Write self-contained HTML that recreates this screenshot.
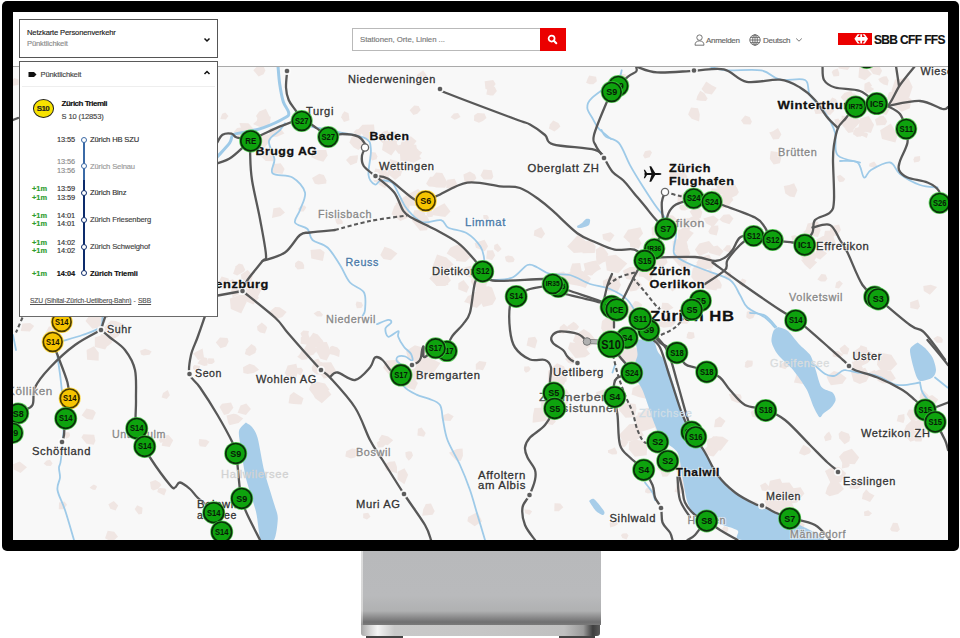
<!DOCTYPE html>
<html><head><meta charset="utf-8">
<style>
*{margin:0;padding:0;box-sizing:border-box}
html,body{width:960px;height:638px;overflow:hidden;background:#fff;font-family:"Liberation Sans",sans-serif}
#frame{position:absolute;left:1.5px;top:1px;width:957.5px;height:550px;background:#000;border-radius:5px}
#screen{position:absolute;left:13px;top:12px;width:935px;height:528px;background:#f7f7f7;overflow:hidden}
#header{position:absolute;left:0;top:0;width:935px;height:55px;background:#fff;border-bottom:1px solid #aaaaaa}
#map{position:absolute;left:0;top:0}
.abs{position:absolute}
.t{white-space:nowrap;line-height:1;-webkit-text-stroke:0.15px currentColor}
#stand{position:absolute;left:361px;top:550px;width:240px;height:88px}
</style></head><body>
<div id="frame"></div>
<div id="screen">
<svg id="map" width="935" height="528" viewBox="13 12 935 528">
<g font-family="Liberation Sans, sans-serif">
<rect x="13" y="12" width="935" height="528" fill="#f8f8f8"/>
<g fill="#f0e6e3"><path d="M614.5 323.2 L612.7 329.4 L604.2 333.4 L601.1 328.5 L602.0 320.9 L607.7 316.6 L611.8 315.6Z"/><path d="M674.4 323.3 L671.6 326.8 L663.6 327.8 L658.3 325.9 L659.2 321.5 L662.8 316.1 L671.5 318.9Z"/><path d="M670.9 318.6 L668.7 321.3 L663.4 321.5 L663.1 315.8 L668.5 314.2Z"/><path d="M607.9 306.7 L605.3 312.0 L601.6 312.0 L599.3 309.8 L599.5 306.9 L603.2 302.8 L606.7 304.2Z"/><path d="M569.1 328.2 L563.6 333.7 L559.2 332.9 L559.8 327.0 L563.9 323.8Z"/><path d="M640.7 352.8 L635.8 364.4 L629.1 365.2 L617.1 357.5 L616.5 349.9 L628.5 344.2 L637.1 348.4Z"/><path d="M591.0 278.2 L585.6 287.9 L575.7 284.5 L574.1 273.6 L582.5 270.9Z"/><path d="M688.8 318.7 L687.5 323.7 L680.4 323.4 L677.4 319.0 L679.5 314.3 L686.6 314.7Z"/><path d="M639.3 319.2 L640.7 323.9 L631.7 322.9 L629.9 320.0 L630.2 313.8 L636.9 314.8Z"/><path d="M638.5 273.8 L634.5 280.3 L626.3 279.0 L622.7 270.8 L629.9 267.0 L637.0 266.7Z"/><path d="M601.1 268.9 L597.4 270.7 L590.9 275.7 L585.2 270.6 L583.6 263.5 L591.8 261.2 L596.4 260.5Z"/><path d="M642.3 304.8 L639.5 310.6 L633.6 312.4 L631.1 309.0 L632.6 304.0 L634.9 301.1 L638.1 301.6Z"/><path d="M608.8 259.6 L602.9 262.4 L599.0 265.0 L596.4 261.5 L596.0 256.8 L597.5 252.9 L604.7 252.9Z"/><path d="M584.7 276.6 L583.4 280.0 L577.6 282.4 L573.2 279.5 L573.7 273.7 L577.3 270.6 L585.1 272.3Z"/><path d="M641.3 243.3 L638.7 248.8 L630.2 247.0 L629.8 241.7 L639.2 239.1Z"/><path d="M582.6 276.7 L581.4 286.2 L565.3 283.5 L565.2 273.9 L577.9 269.1Z"/><path d="M627.3 263.6 L618.2 273.3 L606.8 270.5 L604.8 256.3 L615.8 254.8Z"/><path d="M660.6 330.3 L653.7 336.6 L646.6 333.2 L644.2 325.9 L657.3 324.6Z"/><path d="M652.6 339.5 L649.6 344.9 L645.3 343.3 L645.0 338.9 L650.5 336.2Z"/><path d="M595.7 246.5 L594.7 253.1 L582.5 253.3 L582.2 246.8 L583.8 240.9 L592.1 241.2Z"/><path d="M654.2 272.1 L650.2 282.5 L640.9 275.1 L639.7 269.3 L649.5 264.1Z"/><path d="M581.7 271.0 L581.9 275.6 L570.4 276.6 L570.3 269.5 L572.2 263.5 L580.2 262.9Z"/><path d="M661.8 243.8 L660.4 246.0 L650.8 248.0 L649.5 242.1 L651.7 236.8 L662.8 236.9Z"/><path d="M619.2 283.3 L616.3 291.5 L608.8 291.3 L603.1 287.2 L602.8 280.7 L608.9 277.9 L619.7 278.4Z"/><path d="M586.5 243.6 L584.0 252.3 L573.9 252.9 L567.1 246.6 L570.3 243.2 L577.7 235.0 L584.8 240.0Z"/><path d="M619.9 343.4 L613.6 351.4 L608.2 347.6 L602.3 343.5 L605.9 334.1 L615.0 338.2Z"/><path d="M673.5 307.8 L668.3 310.8 L661.3 309.0 L662.1 302.7 L668.0 303.1Z"/><path d="M641.4 311.3 L637.7 319.9 L628.5 318.0 L625.9 316.6 L622.6 305.6 L631.4 305.4 L638.1 304.2Z"/><path d="M651.8 326.6 L649.3 329.7 L640.2 332.1 L637.8 327.9 L639.0 322.8 L641.7 320.7 L648.5 321.3Z"/><path d="M642.2 285.0 L636.5 290.6 L630.4 291.4 L627.2 287.0 L628.7 283.6 L632.0 281.1 L637.7 279.6Z"/><path d="M569.5 276.8 L558.3 288.6 L550.3 284.1 L550.8 273.9 L563.6 271.4Z"/><path d="M650.1 273.6 L649.0 275.2 L644.1 276.9 L638.7 276.5 L638.8 268.3 L644.6 264.2 L647.2 266.0Z"/><path d="M590.1 353.8 L585.1 357.3 L575.5 357.9 L568.0 348.6 L569.9 342.2 L582.4 343.7Z"/><path d="M641.3 323.2 L641.0 327.1 L633.9 329.7 L633.0 324.8 L631.8 320.4 L636.1 317.2 L639.0 320.1Z"/><path d="M633.9 350.6 L628.8 355.6 L619.5 351.1 L619.0 345.3 L625.8 341.2Z"/><path d="M628.0 304.2 L620.2 312.3 L612.6 309.3 L615.7 300.8 L622.3 300.3Z"/><path d="M597.0 341.2 L592.2 344.5 L584.4 350.7 L572.9 341.1 L575.2 335.0 L583.8 329.0 L589.9 333.0Z"/><path d="M608.4 254.1 L605.1 262.0 L596.4 256.9 L595.6 249.7 L601.9 245.3Z"/><path d="M621.0 284.7 L617.4 292.6 L607.2 290.7 L605.4 283.5 L609.5 275.6 L616.2 276.8Z"/><path d="M643.1 233.4 L634.5 243.8 L629.2 242.5 L623.3 237.0 L628.0 229.8 L640.4 227.3Z"/><path d="M841.2 123.7 L838.4 126.8 L835.5 125.1 L834.4 119.5 L838.4 118.5Z"/><path d="M857.4 95.9 L855.1 99.2 L849.2 100.3 L849.1 97.2 L849.0 93.4 L854.6 93.4Z"/><path d="M871.7 121.1 L865.9 127.2 L861.2 125.4 L859.8 118.5 L868.7 116.1Z"/><path d="M865.3 106.0 L863.5 110.4 L859.8 108.5 L855.6 106.2 L857.1 102.7 L858.1 100.0 L863.0 102.1Z"/><path d="M887.2 121.4 L885.0 125.2 L879.4 123.2 L878.1 121.4 L880.0 116.5 L885.2 117.4Z"/><path d="M888.7 80.5 L887.7 85.4 L883.7 84.6 L879.9 82.0 L878.2 79.0 L883.2 76.4 L886.7 76.3Z"/><path d="M867.7 129.4 L860.6 136.6 L853.0 134.2 L854.9 128.6 L861.3 126.2Z"/><path d="M897.7 134.9 L895.4 142.4 L882.0 139.0 L880.1 130.3 L890.8 123.5Z"/><path d="M834.3 110.7 L830.1 115.1 L823.9 113.9 L825.5 109.4 L831.8 107.8Z"/><path d="M885.4 121.9 L884.3 125.0 L876.6 125.4 L874.9 119.6 L879.9 116.0 L883.9 115.7Z"/><path d="M874.2 89.1 L869.6 92.4 L866.4 92.9 L864.1 89.4 L865.6 86.4 L870.2 86.6Z"/><path d="M896.1 94.9 L891.2 99.7 L887.0 99.8 L888.8 92.4 L894.0 90.7Z"/><path d="M861.3 103.6 L855.5 107.5 L853.0 108.5 L848.0 107.0 L846.9 102.1 L850.9 97.6 L856.8 94.8Z"/><path d="M908.0 100.8 L908.0 107.6 L899.7 107.4 L890.5 101.5 L894.6 96.0 L900.6 90.2 L906.0 92.6Z"/><path d="M864.0 132.4 L862.7 135.8 L857.0 137.1 L853.2 134.0 L853.8 130.8 L856.0 127.7 L861.3 128.0Z"/><path d="M871.9 74.2 L864.9 80.2 L858.4 77.4 L859.3 67.1 L864.8 66.3Z"/><path d="M861.3 120.9 L854.5 128.6 L848.3 132.0 L842.6 125.7 L837.9 120.5 L849.2 116.7 L854.7 116.9Z"/><path d="M911.6 99.4 L909.8 108.3 L901.6 111.7 L889.0 103.3 L891.4 98.2 L899.8 91.4 L905.7 95.6Z"/><path d="M882.1 70.7 L879.8 75.5 L873.1 74.0 L869.1 68.7 L873.7 65.5 L878.8 65.3Z"/><path d="M837.4 101.7 L836.2 105.4 L832.4 104.7 L827.9 103.6 L829.7 100.7 L832.3 97.4 L835.8 99.0Z"/><path d="M890.7 107.5 L886.4 115.1 L876.5 112.0 L878.2 106.9 L885.7 105.9Z"/><path d="M853.3 62.7 L847.6 69.9 L838.7 68.6 L837.2 59.5 L847.5 58.2Z"/><path d="M912.6 86.9 L909.1 97.7 L894.9 95.7 L891.6 89.9 L895.1 79.4 L908.3 77.8Z"/><path d="M851.7 120.8 L849.3 126.9 L843.6 125.7 L841.5 120.1 L841.7 115.5 L849.9 116.9Z"/><path d="M874.1 124.8 L870.9 133.0 L857.9 129.9 L860.1 119.2 L870.1 118.7Z"/><path d="M416.6 140.9 L412.6 146.2 L404.3 145.2 L404.9 136.0 L411.1 136.4Z"/><path d="M370.5 134.7 L371.2 138.0 L365.6 138.9 L363.2 136.9 L363.4 132.6 L366.4 130.0 L371.2 131.8Z"/><path d="M374.8 132.2 L371.9 139.3 L365.5 138.0 L358.0 129.5 L362.5 124.7 L374.0 124.6Z"/><path d="M389.8 136.5 L387.6 139.6 L384.9 140.0 L379.8 139.7 L380.6 133.7 L383.7 131.4 L387.7 130.2Z"/><path d="M396.9 141.4 L396.5 144.8 L389.5 147.4 L382.7 143.1 L378.3 138.8 L387.6 132.4 L395.9 131.2Z"/><path d="M413.1 155.2 L407.7 161.3 L400.4 161.3 L400.0 151.8 L407.6 151.1Z"/><path d="M417.0 150.0 L414.6 154.6 L411.1 154.2 L408.4 149.2 L410.3 144.6 L416.2 144.8Z"/><path d="M402.9 168.6 L400.8 175.2 L395.1 180.0 L387.4 173.6 L387.8 165.9 L390.1 159.3 L398.9 161.6Z"/><path d="M398.5 145.8 L391.3 155.6 L382.0 150.0 L383.5 140.5 L391.1 138.9Z"/><path d="M421.4 158.5 L414.8 162.1 L406.8 158.5 L407.5 153.2 L413.8 149.7Z"/><path d="M377.4 156.2 L376.6 159.3 L372.2 160.4 L369.4 157.6 L369.9 155.1 L370.8 151.9 L375.5 152.6Z"/><path d="M422.2 152.6 L413.9 162.9 L406.7 160.6 L406.4 152.6 L416.3 149.1Z"/><path d="M418.7 150.0 L410.5 161.2 L400.7 156.0 L398.8 151.5 L401.6 141.5 L410.1 142.8Z"/><path d="M398.2 146.4 L394.4 150.4 L390.3 149.4 L388.1 148.2 L388.1 143.5 L391.7 140.7 L396.2 141.9Z"/><path d="M389.6 174.8 L384.6 183.6 L374.4 182.0 L372.3 177.7 L375.4 168.5 L385.5 170.3Z"/><path d="M389.4 181.4 L385.1 188.2 L378.7 184.5 L378.8 178.6 L385.2 179.5Z"/><path d="M411.6 147.4 L404.6 153.5 L398.5 153.8 L393.9 147.7 L399.2 144.9 L407.6 144.4Z"/><path d="M364.2 144.2 L358.6 149.9 L353.7 147.5 L349.4 142.6 L351.8 136.4 L358.6 136.3Z"/><path d="M284.4 133.5 L277.1 136.7 L269.2 137.3 L269.4 128.5 L278.9 126.5Z"/><path d="M262.6 139.2 L260.0 143.6 L251.8 145.2 L250.6 140.4 L253.2 134.0 L261.3 135.3Z"/><path d="M271.2 139.3 L264.4 148.0 L256.4 147.0 L248.5 141.9 L257.5 135.1 L269.1 134.2Z"/><path d="M275.0 156.5 L273.2 161.2 L265.7 161.0 L260.6 156.1 L264.6 147.8 L270.4 148.1Z"/><path d="M253.4 135.3 L249.3 139.6 L241.8 142.9 L237.7 135.1 L241.4 128.6 L249.8 128.0Z"/><path d="M245.0 132.4 L241.9 135.8 L238.0 136.2 L233.6 132.1 L237.1 128.0 L240.7 127.5Z"/><path d="M255.7 136.5 L250.5 139.5 L242.1 138.8 L245.3 132.0 L251.8 129.6Z"/><path d="M270.0 122.8 L266.6 127.9 L262.1 128.1 L253.0 124.1 L256.8 120.8 L258.3 114.7 L270.8 116.7Z"/><path d="M270.4 118.2 L265.1 121.8 L259.5 121.6 L256.0 115.9 L259.2 111.4 L265.9 108.8Z"/><path d="M255.4 130.8 L248.6 134.0 L242.2 131.7 L239.4 123.1 L248.4 123.2Z"/><path d="M470.8 256.8 L465.4 262.1 L456.1 260.9 L456.3 249.7 L463.7 249.9Z"/><path d="M450.9 280.6 L445.3 286.1 L436.4 286.0 L432.0 279.4 L438.1 273.2 L445.5 271.3Z"/><path d="M495.2 255.4 L492.1 260.2 L486.2 258.5 L487.1 250.4 L492.9 250.2Z"/><path d="M453.6 264.5 L445.5 271.5 L436.0 272.2 L432.7 266.3 L437.0 254.4 L446.5 257.5Z"/><path d="M482.4 282.6 L482.7 289.0 L473.9 287.2 L470.8 281.7 L471.7 278.2 L479.5 276.9Z"/><path d="M488.1 281.4 L486.1 285.6 L481.0 285.4 L478.1 282.6 L480.2 279.5 L482.2 277.3 L487.8 278.0Z"/><path d="M468.3 254.8 L466.9 258.6 L455.8 259.2 L446.6 253.4 L450.5 247.5 L456.7 244.9 L461.8 244.3Z"/><path d="M495.3 297.2 L486.6 301.7 L477.2 303.3 L473.9 292.2 L485.3 289.9Z"/><path d="M496.1 298.8 L492.5 304.7 L483.1 307.1 L479.4 299.0 L476.1 293.0 L488.1 286.0 L492.0 287.5Z"/><path d="M481.8 303.3 L476.8 308.1 L470.1 305.7 L468.9 300.2 L475.8 295.7Z"/><path d="M447.2 275.9 L448.3 285.0 L436.9 286.1 L429.3 278.6 L435.9 271.5 L447.1 270.7Z"/><path d="M487.0 292.7 L484.0 295.6 L476.6 297.7 L475.4 294.0 L475.8 288.6 L479.1 284.2 L486.6 285.5Z"/><path d="M469.1 286.9 L466.7 292.8 L458.2 289.3 L458.4 283.2 L463.6 280.1Z"/><path d="M476.5 269.6 L472.0 278.0 L463.6 275.1 L461.3 268.4 L470.5 265.8Z"/><path d="M863.0 367.9 L859.4 372.5 L854.4 371.7 L848.1 368.4 L852.4 361.5 L859.0 362.6Z"/><path d="M849.4 348.7 L847.5 354.4 L842.8 354.1 L840.7 351.3 L839.5 348.4 L844.7 344.6 L847.6 347.3Z"/><path d="M897.3 363.9 L890.8 370.6 L881.1 370.4 L877.0 364.8 L878.3 352.3 L891.4 354.7Z"/><path d="M878.0 375.4 L874.1 377.4 L867.6 376.2 L868.7 372.4 L874.8 369.9Z"/><path d="M867.2 348.6 L866.9 353.3 L861.2 355.3 L857.3 352.6 L859.4 348.0 L860.6 345.2 L866.7 347.3Z"/><path d="M846.6 378.0 L842.5 383.7 L830.9 385.3 L828.9 382.0 L826.5 376.6 L833.9 371.1 L839.4 372.5Z"/><path d="M869.8 375.3 L866.4 381.5 L859.7 384.0 L853.5 381.2 L850.6 370.7 L858.7 369.9 L865.2 367.8Z"/><path d="M843.4 354.7 L839.4 357.7 L832.6 356.4 L832.8 351.6 L838.1 351.1Z"/><path d="M888.6 374.7 L886.9 380.5 L878.4 377.9 L874.9 371.8 L878.7 369.8 L887.0 369.1Z"/><path d="M895.8 378.4 L889.9 382.5 L884.0 383.6 L879.7 376.8 L883.4 370.8 L890.8 370.8Z"/><path d="M875.4 354.4 L867.7 362.9 L859.3 367.0 L856.2 359.7 L853.3 351.7 L860.6 346.8 L868.8 350.4Z"/><path d="M891.0 377.7 L891.4 380.0 L882.8 383.6 L877.3 380.6 L877.4 374.2 L883.1 372.1 L887.8 371.9Z"/><path d="M927.2 428.8 L923.3 437.7 L910.4 441.7 L902.7 433.3 L906.4 425.2 L911.5 420.6 L922.7 421.5Z"/><path d="M931.1 424.5 L925.0 430.8 L916.8 429.8 L915.8 420.9 L924.4 416.3Z"/><path d="M930.5 423.7 L928.7 426.7 L922.2 426.5 L919.1 422.7 L922.8 420.9 L928.3 420.0Z"/><path d="M942.9 417.3 L938.1 423.1 L931.8 421.8 L930.6 418.3 L933.3 411.8 L938.4 412.4Z"/><path d="M923.2 434.8 L921.5 441.4 L915.4 441.4 L911.6 435.2 L914.1 429.4 L920.2 429.1Z"/><path d="M921.8 413.1 L917.8 419.8 L911.9 422.1 L906.7 414.2 L909.0 409.5 L916.2 410.0Z"/><path d="M940.7 416.8 L941.1 419.2 L937.5 420.0 L932.6 417.3 L933.1 413.3 L935.7 413.5 L941.1 413.5Z"/><path d="M928.7 395.4 L924.7 401.9 L919.4 398.3 L920.4 393.7 L923.6 390.2Z"/><path d="M904.7 418.9 L903.5 422.9 L896.8 421.2 L898.1 415.2 L904.3 413.9Z"/><path d="M938.2 399.6 L932.2 408.5 L926.1 402.9 L925.9 397.6 L932.2 395.1Z"/><path d="M719.8 448.9 L713.7 456.6 L710.5 456.1 L705.2 453.9 L704.3 448.9 L711.8 443.2 L714.9 445.4Z"/><path d="M695.2 437.6 L690.9 442.0 L685.9 442.5 L682.2 438.6 L679.6 434.3 L684.2 432.1 L689.9 433.8Z"/><path d="M721.0 445.0 L716.0 449.9 L707.4 447.9 L707.0 439.2 L717.1 436.3Z"/><path d="M686.1 482.5 L685.0 486.3 L680.5 485.4 L679.2 480.6 L680.7 477.3 L685.2 477.4Z"/><path d="M714.1 478.8 L711.0 485.8 L703.5 486.3 L694.8 475.8 L703.5 470.1 L713.9 469.2Z"/><path d="M704.3 484.2 L701.9 486.8 L696.1 487.3 L694.6 484.1 L698.2 480.7 L701.3 479.2Z"/><path d="M728.6 440.6 L720.6 450.8 L712.2 447.7 L707.1 443.4 L713.2 436.2 L722.6 436.7Z"/><path d="M703.9 486.3 L699.5 491.6 L695.0 492.0 L689.9 485.0 L693.3 482.2 L701.2 481.9Z"/><path d="M692.0 472.0 L689.1 480.3 L680.3 477.0 L682.3 469.4 L688.3 469.2Z"/><path d="M705.6 502.1 L700.8 512.0 L693.4 511.8 L689.1 502.7 L691.5 493.5 L700.7 495.4Z"/><path d="M693.4 465.6 L690.9 471.5 L678.2 474.8 L673.3 466.1 L678.1 454.5 L687.7 456.7Z"/><path d="M696.8 488.6 L694.3 493.7 L691.5 492.2 L688.2 492.2 L688.3 488.7 L691.2 486.0 L696.1 487.0Z"/><path d="M690.0 484.7 L682.7 494.0 L674.5 491.8 L677.1 484.2 L683.8 481.1Z"/><path d="M712.4 494.1 L708.7 496.3 L703.7 495.7 L704.0 490.5 L707.8 490.5Z"/><path d="M704.0 480.6 L701.7 487.6 L694.3 484.8 L695.2 476.7 L700.9 473.0Z"/><path d="M711.0 472.0 L709.8 477.3 L702.0 477.7 L700.6 474.5 L701.1 469.6 L705.4 466.4 L707.9 467.0Z"/><path d="M784.4 533.4 L782.8 540.0 L773.4 537.9 L770.3 533.8 L773.2 526.7 L779.9 527.7Z"/><path d="M783.5 485.8 L778.1 493.4 L768.0 489.8 L769.9 480.8 L780.1 478.5Z"/><path d="M793.1 497.7 L793.0 503.3 L784.3 498.9 L783.0 494.6 L789.3 492.3Z"/><path d="M795.2 509.4 L790.4 514.7 L786.2 515.6 L779.6 510.4 L775.6 506.6 L786.2 500.6 L790.4 500.2Z"/><path d="M780.9 506.7 L777.0 513.4 L770.3 512.5 L763.5 506.8 L764.8 500.3 L767.7 499.0 L780.5 497.6Z"/><path d="M804.4 493.4 L797.0 502.5 L788.3 504.1 L786.5 493.4 L787.5 489.1 L800.6 487.2Z"/><path d="M788.0 500.6 L783.3 504.5 L775.9 504.6 L771.0 497.6 L772.9 492.7 L781.8 494.5Z"/><path d="M757.4 507.8 L754.2 515.4 L741.9 515.9 L740.1 508.5 L745.2 502.8 L756.4 501.2Z"/><path d="M794.6 489.8 L793.8 497.4 L782.7 501.0 L777.7 495.5 L777.0 483.6 L784.0 482.8 L789.5 482.4Z"/><path d="M769.9 487.4 L765.9 491.1 L761.9 490.6 L760.1 485.3 L765.4 482.5Z"/><path d="M793.3 511.1 L790.9 517.4 L783.8 516.3 L780.6 512.0 L782.0 505.9 L789.3 507.2Z"/><path d="M804.8 524.7 L799.9 534.3 L789.2 532.3 L788.2 523.8 L799.9 520.8Z"/><path d="M668.0 231.3 L665.1 238.1 L658.8 235.6 L651.9 235.6 L651.6 227.7 L658.9 223.3 L664.6 224.3Z"/><path d="M690.4 253.2 L685.7 262.2 L679.2 266.0 L671.7 257.2 L675.1 251.8 L679.1 249.2 L686.9 245.8Z"/><path d="M693.4 223.4 L691.4 228.6 L684.5 229.2 L679.1 227.5 L678.4 220.3 L684.7 217.7 L689.0 218.6Z"/><path d="M688.0 246.6 L683.9 254.0 L679.0 252.8 L672.8 249.7 L672.6 241.4 L676.4 239.3 L686.0 239.3Z"/><path d="M692.1 265.3 L686.9 272.1 L681.5 270.8 L680.0 263.1 L685.4 262.4Z"/><path d="M693.8 232.9 L684.5 244.0 L678.2 239.4 L677.9 230.2 L685.1 227.7Z"/><path d="M723.6 251.2 L719.8 256.0 L709.0 253.1 L709.1 247.6 L717.5 245.4Z"/><path d="M658.9 260.9 L655.8 267.4 L639.8 267.4 L636.9 258.4 L644.8 251.4 L653.4 250.9Z"/><path d="M664.3 230.2 L661.9 235.1 L658.3 236.3 L654.3 231.8 L655.0 228.6 L656.4 227.0 L660.6 227.1Z"/><path d="M705.3 274.6 L703.4 279.7 L695.4 282.4 L691.2 277.1 L692.7 268.5 L697.3 263.4 L706.6 265.7Z"/><path d="M676.7 287.4 L675.2 289.4 L672.2 291.4 L669.0 287.1 L671.6 283.9 L675.0 283.6Z"/><path d="M714.4 264.2 L712.0 268.6 L701.5 269.8 L696.3 262.8 L700.0 257.3 L709.2 254.5Z"/><path d="M677.5 220.1 L674.4 224.3 L666.3 224.8 L666.7 215.0 L673.0 215.5Z"/><path d="M662.3 253.1 L658.7 259.5 L653.7 256.5 L649.0 253.0 L647.1 249.8 L653.4 244.3 L661.2 245.7Z"/><path d="M721.8 284.9 L721.1 288.5 L713.5 288.8 L711.7 287.3 L709.8 281.2 L714.4 278.6 L719.8 280.4Z"/><path d="M731.3 249.6 L730.5 252.3 L727.1 251.7 L722.9 250.1 L724.2 248.2 L726.7 245.3 L730.2 245.3Z"/><path d="M654.9 263.0 L654.9 274.5 L639.7 271.0 L634.3 264.9 L638.4 259.0 L652.9 257.1Z"/><path d="M667.6 262.6 L664.3 265.7 L660.0 266.4 L655.9 263.9 L660.4 257.7 L666.6 259.0Z"/><path d="M714.2 247.1 L707.5 252.8 L699.2 255.9 L694.9 249.6 L699.3 243.4 L709.1 241.0Z"/><path d="M719.2 281.0 L706.9 289.1 L697.4 284.4 L698.6 273.1 L710.6 269.1Z"/><path d="M718.8 283.8 L716.4 290.5 L707.6 289.3 L703.0 286.7 L707.6 278.1 L717.5 278.5Z"/><path d="M718.5 229.1 L716.7 235.4 L709.9 234.1 L708.3 231.6 L711.5 225.8 L718.2 225.6Z"/><path d="M724.6 184.7 L722.5 189.3 L716.2 187.4 L717.1 182.7 L720.1 182.4Z"/><path d="M732.1 198.9 L728.5 207.6 L721.4 208.3 L719.8 203.8 L717.6 196.4 L721.5 195.0 L731.1 195.6Z"/><path d="M702.4 212.1 L700.5 218.3 L692.6 216.2 L689.6 211.6 L694.3 207.4 L698.3 206.3Z"/><path d="M690.0 228.7 L688.7 232.2 L685.4 232.2 L682.1 228.7 L685.0 225.1 L688.1 226.3Z"/><path d="M706.4 167.9 L700.6 173.1 L695.1 170.0 L697.5 165.2 L702.5 163.3Z"/><path d="M737.8 189.3 L731.8 195.5 L723.9 196.5 L717.4 188.5 L716.4 183.3 L726.5 179.8 L730.4 178.1Z"/><path d="M700.8 221.8 L699.0 226.2 L690.7 224.7 L688.5 218.5 L697.5 213.8Z"/><path d="M733.4 199.9 L728.7 204.8 L718.9 202.5 L722.4 196.7 L729.6 193.1Z"/><path d="M688.8 209.0 L685.1 210.6 L681.4 210.3 L679.1 208.0 L680.0 204.9 L686.4 204.6Z"/><path d="M733.5 218.6 L729.4 224.2 L722.5 222.1 L719.4 219.5 L723.5 214.7 L729.4 214.3Z"/><path d="M722.8 192.9 L718.4 198.0 L714.0 197.2 L710.8 193.4 L711.6 188.4 L719.0 188.6Z"/><path d="M692.4 200.2 L685.6 203.9 L677.5 202.3 L677.8 195.5 L685.0 192.0Z"/><path d="M738.9 191.9 L736.9 195.2 L726.9 200.0 L723.8 193.8 L724.3 188.5 L729.8 179.8 L735.4 185.6Z"/><path d="M687.3 176.5 L684.0 184.4 L668.6 179.4 L670.7 168.9 L682.7 167.4Z"/><path d="M800.0 239.7 L796.6 243.2 L792.5 240.9 L791.2 236.0 L795.3 235.1Z"/><path d="M820.6 230.1 L817.9 237.3 L804.3 234.0 L807.7 223.6 L817.9 221.4Z"/><path d="M810.4 233.5 L807.9 238.2 L803.5 238.4 L803.6 231.6 L807.0 229.4Z"/><path d="M831.7 243.0 L828.4 246.0 L821.3 248.7 L817.8 242.0 L816.4 239.4 L823.0 235.9 L830.4 235.8Z"/><path d="M817.2 256.1 L811.9 264.8 L804.2 261.8 L800.6 255.5 L802.9 249.6 L813.6 248.7Z"/><path d="M836.1 244.1 L828.4 251.4 L821.9 249.0 L819.3 238.5 L832.7 234.6Z"/><path d="M817.2 262.2 L810.0 269.4 L804.7 264.8 L800.9 259.7 L811.5 258.7Z"/><path d="M827.1 253.3 L820.2 259.6 L816.4 257.9 L815.8 250.7 L820.2 248.7Z"/><path d="M834.0 235.8 L831.2 240.8 L827.4 240.9 L824.0 236.2 L825.0 230.8 L834.5 230.5Z"/><path d="M840.9 229.9 L837.0 236.0 L829.3 235.0 L830.6 226.3 L839.1 224.6Z"/><path d="M251.5 292.9 L251.6 296.3 L247.4 298.7 L242.4 294.5 L241.8 292.4 L245.2 289.6 L249.7 288.4Z"/><path d="M242.4 291.4 L239.8 294.0 L232.6 297.4 L232.0 294.3 L231.0 289.8 L234.5 285.9 L238.5 287.7Z"/><path d="M246.7 302.0 L241.2 313.4 L230.8 309.1 L229.8 298.5 L244.0 293.2Z"/><path d="M245.2 269.7 L244.2 271.6 L237.2 275.5 L233.1 273.8 L235.7 266.2 L239.0 263.4 L242.7 264.6Z"/><path d="M229.5 283.6 L227.8 286.6 L222.2 289.7 L218.4 282.1 L221.6 276.6 L228.5 278.5Z"/><path d="M262.8 287.1 L256.6 299.2 L242.5 297.6 L240.3 286.4 L253.7 281.3Z"/><path d="M259.0 297.7 L253.4 304.4 L245.8 301.3 L243.8 291.7 L253.4 289.8Z"/><path d="M252.7 276.6 L250.7 282.5 L245.9 282.4 L241.4 278.3 L240.8 274.4 L247.6 270.0 L250.4 272.8Z"/><path d="M417.9 383.1 L414.7 389.9 L405.2 386.9 L402.2 378.4 L410.7 374.7Z"/><path d="M440.5 363.1 L433.6 372.8 L424.3 373.9 L419.1 367.4 L420.2 363.5 L423.0 357.4 L431.1 358.4Z"/><path d="M422.7 371.2 L416.9 380.2 L408.2 379.4 L405.1 371.6 L410.7 364.4 L421.6 363.7Z"/><path d="M430.7 360.8 L428.0 367.7 L417.4 370.0 L412.0 360.1 L417.3 357.4 L424.3 352.9Z"/><path d="M433.9 371.8 L426.3 377.5 L416.0 377.4 L417.2 364.8 L423.8 362.9Z"/><path d="M426.4 352.3 L429.2 360.3 L418.4 366.0 L407.9 359.1 L406.1 350.9 L414.8 345.2 L423.8 347.7Z"/><path d="M414.2 377.5 L411.1 382.5 L406.5 380.7 L406.1 372.4 L412.3 373.1Z"/><path d="M401.1 366.7 L400.5 374.1 L389.6 375.2 L383.1 367.8 L386.1 360.5 L398.6 359.8Z"/><path d="M323.4 341.2 L321.5 347.6 L313.7 347.3 L306.5 341.9 L313.2 332.8 L317.8 334.4Z"/><path d="M303.3 370.2 L300.6 375.6 L298.0 373.9 L295.6 372.3 L294.4 369.1 L297.4 368.0 L301.2 367.7Z"/><path d="M331.0 352.1 L326.7 360.4 L320.4 358.7 L315.2 349.6 L318.9 342.3 L326.8 342.0Z"/><path d="M315.0 352.3 L314.0 354.5 L308.0 356.3 L305.7 354.5 L305.0 349.4 L307.3 347.0 L314.6 348.8Z"/><path d="M329.5 389.8 L322.3 394.3 L314.9 397.0 L308.9 389.2 L312.7 380.7 L325.0 383.6Z"/><path d="M335.9 370.6 L330.8 376.6 L323.8 378.8 L318.5 371.3 L321.2 362.4 L331.1 362.3Z"/><path d="M308.4 356.7 L307.1 359.3 L301.9 359.9 L297.2 356.7 L299.2 355.0 L302.0 350.1 L308.2 351.2Z"/><path d="M321.9 364.0 L318.9 367.9 L312.4 366.8 L313.9 360.1 L318.3 358.8Z"/><path d="M298.2 370.9 L295.9 379.3 L287.1 376.4 L284.7 373.2 L287.7 365.5 L296.3 363.7Z"/><path d="M340.0 350.5 L339.2 357.0 L333.9 355.0 L329.3 354.1 L330.0 346.9 L332.3 345.8 L337.5 347.5Z"/><path d="M331.4 394.6 L321.8 403.2 L314.8 398.1 L311.8 390.3 L324.4 385.5Z"/><path d="M324.5 370.7 L326.0 374.2 L316.8 374.5 L312.3 371.1 L311.7 367.3 L316.7 361.7 L322.0 362.0Z"/><path d="M316.1 348.2 L316.4 352.5 L310.1 352.5 L303.8 349.7 L306.6 344.4 L308.6 341.2 L314.8 345.4Z"/><path d="M311.1 340.1 L309.1 345.1 L300.7 343.7 L300.8 337.2 L307.4 333.4Z"/><path d="M120.2 332.2 L118.8 336.0 L113.1 339.1 L108.5 337.4 L108.6 328.7 L111.8 326.3 L117.6 328.9Z"/><path d="M106.0 321.0 L98.6 327.5 L92.4 328.8 L85.5 321.0 L90.1 314.2 L101.6 311.4Z"/><path d="M103.7 313.0 L103.0 317.0 L95.0 317.4 L93.0 311.1 L96.2 309.5 L102.1 307.4Z"/><path d="M124.8 324.5 L116.1 333.7 L110.8 334.0 L101.8 329.5 L110.8 320.4 L115.5 320.9Z"/><path d="M108.6 343.6 L105.2 349.5 L94.8 347.1 L94.8 337.5 L101.7 335.3Z"/><path d="M98.8 352.7 L98.6 360.7 L87.1 359.7 L86.6 350.0 L94.0 346.2Z"/><path d="M112.5 342.2 L107.6 346.3 L104.0 345.4 L100.0 343.5 L99.7 338.9 L101.0 334.1 L108.7 335.9Z"/><path d="M93.9 309.4 L89.3 313.3 L83.7 313.7 L82.0 306.5 L89.4 303.8Z"/><path d="M562.0 406.7 L555.0 413.2 L547.8 414.8 L541.1 412.9 L541.1 401.6 L551.1 399.1 L557.3 398.1Z"/><path d="M566.9 403.7 L565.8 407.7 L560.5 408.1 L558.1 403.8 L561.0 400.9 L565.7 400.0Z"/><path d="M548.7 413.1 L545.5 421.1 L532.6 422.7 L533.0 414.9 L534.4 407.9 L546.3 407.4Z"/><path d="M566.7 375.1 L566.6 381.4 L554.3 383.9 L547.8 382.5 L548.1 371.1 L557.1 363.2 L564.2 366.5Z"/><path d="M568.1 409.1 L559.4 418.8 L555.0 418.8 L546.2 412.4 L541.4 407.4 L555.0 402.0 L561.8 401.3Z"/><path d="M570.4 396.4 L563.2 402.0 L556.4 400.9 L550.1 394.5 L557.5 390.2 L566.6 389.3Z"/><path d="M553.7 409.5 L554.0 414.4 L546.8 414.9 L542.9 414.6 L543.5 408.5 L546.5 406.1 L553.1 407.9Z"/><path d="M568.1 403.0 L562.8 405.9 L558.9 405.4 L553.7 400.0 L557.8 397.4 L565.2 396.3Z"/><path d="M628.4 442.3 L625.1 446.7 L620.7 447.7 L618.7 442.5 L621.2 439.7 L624.4 438.6Z"/><path d="M660.6 417.7 L656.7 419.9 L651.2 422.1 L647.7 416.1 L649.8 413.9 L657.4 413.5Z"/><path d="M657.9 396.6 L655.6 400.4 L649.0 401.0 L645.9 396.8 L650.0 389.6 L656.8 389.0Z"/><path d="M666.9 427.5 L664.3 432.6 L656.0 429.9 L653.7 423.3 L661.0 420.5Z"/><path d="M658.2 412.3 L656.2 419.5 L648.2 420.2 L643.5 412.1 L645.8 408.0 L656.1 408.4Z"/><path d="M652.2 418.7 L648.2 424.1 L640.9 422.3 L637.0 420.2 L637.8 412.5 L642.6 412.4 L647.9 409.8Z"/><path d="M653.3 395.2 L652.8 399.6 L646.9 398.6 L645.5 393.1 L652.2 392.7Z"/><path d="M658.0 423.9 L654.1 427.7 L642.4 431.4 L636.1 427.7 L635.5 415.7 L647.4 414.6 L651.8 416.2Z"/><path d="M647.3 444.6 L646.7 455.2 L634.9 456.7 L628.8 449.3 L629.0 441.9 L634.9 439.5 L645.8 441.6Z"/><path d="M644.0 435.4 L636.8 439.9 L623.8 442.2 L618.7 435.3 L629.3 424.2 L637.0 423.5Z"/><path d="M636.5 408.4 L634.7 417.3 L625.5 417.7 L618.6 409.7 L620.8 402.0 L635.5 403.9Z"/><path d="M638.8 433.5 L635.0 438.7 L630.0 435.8 L631.4 431.9 L633.7 430.5Z"/><path d="M651.6 393.6 L647.7 398.9 L639.3 397.2 L631.6 394.6 L632.7 388.1 L638.3 385.1 L646.1 385.0Z"/><path d="M650.9 416.8 L646.8 424.5 L642.2 424.2 L639.5 418.3 L642.8 414.2 L646.7 412.3Z"/><path d="M409.2 210.5 L408.3 217.4 L400.3 221.1 L391.5 214.2 L394.2 206.6 L401.0 197.8 L409.8 203.4Z"/><path d="M425.5 213.5 L422.6 222.4 L415.2 221.6 L412.8 215.6 L414.1 210.3 L422.2 210.1Z"/><path d="M406.4 206.6 L404.0 210.7 L397.9 209.5 L395.6 202.9 L403.8 201.6Z"/><path d="M447.7 182.9 L445.1 187.7 L435.9 187.4 L427.7 183.1 L436.1 172.5 L442.3 172.9Z"/><path d="M441.1 182.7 L436.0 187.0 L428.9 186.4 L426.1 183.7 L430.0 176.8 L437.7 176.7Z"/><path d="M430.0 221.8 L427.0 230.3 L420.0 230.7 L411.8 220.6 L417.6 214.9 L426.7 215.3Z"/><path d="M450.5 211.6 L445.2 217.1 L431.5 215.1 L433.8 208.8 L444.5 203.3Z"/><path d="M433.3 212.7 L432.6 216.8 L427.8 217.3 L426.4 213.4 L428.1 208.9 L432.3 210.5Z"/><path d="M426.3 196.5 L417.2 205.8 L407.2 205.7 L400.1 199.5 L409.2 193.4 L418.1 188.9Z"/><path d="M457.1 184.1 L455.0 189.0 L446.1 188.0 L447.3 179.8 L454.7 178.7Z"/><path d="M862.7 484.8 L857.3 488.9 L849.7 488.5 L849.8 479.8 L859.3 478.9Z"/><path d="M849.9 464.9 L848.3 467.2 L841.8 468.5 L842.4 461.2 L846.3 459.6Z"/><path d="M844.0 489.0 L838.1 493.9 L829.6 496.3 L825.4 493.5 L827.2 487.4 L831.6 480.1 L837.9 481.1Z"/><path d="M859.2 457.6 L854.7 464.2 L842.6 463.6 L839.0 456.7 L843.6 451.8 L851.9 448.7Z"/><path d="M874.5 495.4 L870.0 502.1 L865.3 500.1 L861.9 499.0 L862.9 493.7 L866.3 489.3 L869.4 492.7Z"/><path d="M846.2 473.3 L840.9 482.2 L830.7 483.2 L824.9 471.0 L832.4 467.1 L839.5 467.3Z"/><path d="M204.4 184.1 L199.9 188.4 L195.8 185.0 L196.5 180.9 L200.6 180.3Z"/><path d="M161.4 485.1 L158.2 488.7 L153.2 490.5 L151.0 488.8 L150.0 482.0 L155.4 480.1 L159.9 482.7Z"/><path d="M324.6 252.3 L322.9 260.9 L311.3 258.5 L310.5 250.1 L320.4 248.9Z"/><path d="M493.3 176.8 L491.5 179.4 L483.7 179.6 L480.5 175.6 L483.5 169.4 L491.8 170.3Z"/><path d="M628.5 535.6 L626.5 539.4 L622.4 538.1 L620.9 535.3 L622.7 533.4 L626.7 533.3Z"/><path d="M463.0 455.7 L460.7 461.1 L456.3 460.5 L452.4 456.4 L448.9 452.8 L456.9 449.0 L462.6 448.6Z"/><path d="M872.1 85.7 L868.1 88.5 L864.3 88.8 L864.5 83.8 L869.2 81.5Z"/><path d="M130.6 157.2 L125.1 161.5 L120.5 159.4 L115.6 152.2 L126.4 147.3Z"/><path d="M563.3 507.3 L558.8 511.2 L554.3 511.2 L554.5 503.3 L560.2 503.5Z"/><path d="M827.4 278.8 L825.3 281.5 L821.0 281.6 L817.3 279.4 L821.3 274.1 L825.6 274.4Z"/><path d="M744.2 514.0 L742.2 517.4 L740.1 518.5 L736.0 516.5 L738.0 512.4 L739.4 509.9 L742.5 511.3Z"/><path d="M574.2 360.4 L573.3 364.1 L568.5 363.0 L565.0 359.0 L568.7 356.3 L572.9 357.6Z"/><path d="M361.6 133.4 L359.9 135.8 L356.0 135.9 L354.6 133.5 L353.4 132.4 L356.1 129.5 L359.9 128.9Z"/><path d="M256.6 349.0 L255.3 352.9 L249.5 356.0 L244.8 354.1 L246.1 349.2 L251.4 343.9 L254.9 346.2Z"/><path d="M208.9 71.7 L206.5 73.4 L203.0 76.5 L198.6 74.8 L197.6 69.8 L202.3 67.6 L206.9 69.0Z"/><path d="M652.0 152.5 L649.6 157.2 L644.8 158.5 L643.1 155.5 L644.6 151.9 L645.5 151.0 L650.1 150.3Z"/><path d="M209.5 441.8 L205.7 447.1 L199.8 446.2 L198.7 443.8 L199.1 438.9 L206.2 439.8Z"/><path d="M76.0 114.2 L75.3 117.5 L70.1 118.9 L68.9 116.1 L69.4 112.0 L72.2 109.9 L76.7 110.4Z"/><path d="M530.8 368.8 L528.9 371.5 L525.9 372.8 L524.0 370.5 L524.3 366.6 L526.2 366.6 L528.8 366.2Z"/><path d="M169.9 395.3 L166.7 399.0 L161.6 397.6 L163.0 393.1 L167.8 390.0Z"/><path d="M285.0 212.6 L280.6 216.1 L272.0 217.9 L273.4 208.3 L280.0 207.2Z"/><path d="M308.5 333.6 L308.5 338.5 L304.9 338.7 L301.7 336.6 L300.5 333.2 L303.3 330.5 L308.9 331.1Z"/><path d="M408.1 474.7 L404.4 484.3 L397.5 479.6 L397.6 471.8 L404.5 468.3Z"/><path d="M357.9 158.3 L356.9 162.8 L350.5 165.3 L346.0 159.9 L350.0 156.0 L357.9 155.2Z"/><path d="M212.4 67.8 L205.8 74.8 L201.3 74.9 L195.6 70.4 L200.4 62.5 L207.3 65.5Z"/><path d="M413.0 455.5 L411.3 458.3 L408.8 460.7 L405.8 456.9 L405.3 452.2 L409.1 451.2 L411.7 451.8Z"/><path d="M842.9 283.5 L838.9 288.4 L835.1 287.8 L836.2 282.5 L839.5 280.5Z"/><path d="M34.2 326.0 L29.8 331.6 L20.7 331.0 L22.4 323.4 L30.1 323.0Z"/><path d="M870.8 109.3 L866.9 112.0 L863.3 114.4 L859.3 111.3 L856.8 104.9 L862.7 102.3 L865.5 104.7Z"/><path d="M363.0 305.4 L361.4 307.9 L356.9 308.3 L355.7 304.5 L356.6 301.6 L361.6 302.2Z"/><path d="M286.6 312.1 L282.4 317.0 L274.6 319.7 L269.1 311.9 L275.1 307.1 L279.7 307.2Z"/><path d="M120.4 297.6 L118.3 304.4 L112.3 304.8 L109.1 300.2 L108.6 297.5 L110.5 291.7 L119.5 293.3Z"/><path d="M920.3 160.1 L918.8 161.8 L914.1 162.6 L913.4 159.6 L914.6 156.8 L920.0 156.1Z"/><path d="M899.9 529.4 L897.4 532.1 L891.6 531.2 L890.1 529.3 L893.0 522.7 L897.5 523.0Z"/><path d="M67.0 504.8 L63.6 509.2 L58.8 509.3 L59.0 502.6 L64.5 501.4Z"/><path d="M864.1 359.7 L859.6 367.0 L854.4 364.3 L853.8 358.3 L860.9 355.4Z"/><path d="M167.5 438.9 L165.4 440.7 L160.6 442.9 L159.1 440.8 L159.4 436.8 L161.0 435.4 L166.0 435.5Z"/><path d="M397.0 467.0 L397.0 473.3 L388.9 471.1 L386.1 470.4 L384.2 464.6 L389.5 461.8 L394.9 461.3Z"/><path d="M190.0 170.4 L188.4 173.1 L182.7 175.2 L180.5 172.2 L178.8 168.0 L183.7 163.9 L187.1 166.1Z"/><path d="M501.6 249.0 L498.0 252.2 L494.0 249.0 L494.3 244.9 L497.5 243.4Z"/><path d="M250.9 409.1 L245.9 415.0 L237.6 412.8 L240.5 405.4 L246.3 403.5Z"/><path d="M58.2 331.8 L55.4 336.8 L46.7 337.2 L45.7 332.4 L48.9 326.6 L56.3 326.9Z"/><path d="M52.6 463.6 L50.7 465.9 L46.3 465.7 L43.7 463.5 L46.6 460.6 L50.0 459.7Z"/><path d="M579.1 326.8 L577.1 329.7 L571.9 330.8 L566.5 328.0 L568.0 325.8 L573.6 321.8 L576.1 323.5Z"/><path d="M304.1 265.0 L304.2 268.8 L297.6 269.4 L295.0 266.6 L295.2 263.0 L298.2 260.5 L302.3 261.9Z"/><path d="M415.1 378.8 L413.9 381.6 L408.8 384.0 L404.5 377.3 L409.2 373.3 L414.0 374.9Z"/><path d="M428.3 77.8 L425.5 83.6 L416.9 79.6 L416.9 74.9 L423.1 70.3Z"/><path d="M476.4 178.2 L473.1 181.8 L467.9 183.0 L464.6 182.5 L463.4 174.6 L469.9 171.5 L474.9 174.4Z"/><path d="M745.3 283.0 L744.4 285.2 L742.4 287.2 L739.7 285.1 L738.8 282.2 L742.4 278.6 L746.5 280.2Z"/><path d="M460.5 117.0 L456.8 119.0 L454.6 119.8 L450.5 117.3 L453.8 113.6 L458.1 113.1Z"/><path d="M420.7 110.0 L417.4 113.8 L413.4 115.1 L409.6 110.2 L414.2 105.6 L418.6 105.9Z"/><path d="M495.7 84.0 L490.8 90.6 L485.5 88.9 L484.6 81.2 L493.2 79.9Z"/><path d="M95.9 412.7 L92.6 419.8 L86.8 419.1 L81.7 415.2 L86.4 408.5 L93.4 409.9Z"/><path d="M496.9 90.9 L493.2 95.6 L490.7 95.6 L486.3 94.6 L487.3 89.0 L491.0 85.6 L494.7 86.8Z"/><path d="M370.5 516.8 L367.0 519.4 L363.2 518.1 L363.2 513.6 L368.2 512.8Z"/><path d="M821.5 539.5 L818.5 544.1 L812.7 542.7 L808.7 536.9 L811.7 533.1 L816.3 534.0Z"/><path d="M781.2 158.1 L779.9 163.2 L773.6 164.5 L769.8 159.0 L770.3 154.2 L770.8 150.9 L780.1 152.6Z"/><path d="M482.1 521.2 L474.7 526.2 L467.4 521.3 L468.1 516.9 L477.4 512.0Z"/><path d="M173.2 440.3 L169.7 446.9 L161.7 445.7 L163.8 436.0 L168.3 434.8Z"/><path d="M79.8 233.3 L77.3 235.5 L70.4 235.9 L66.3 233.4 L70.1 226.6 L77.7 228.9Z"/><path d="M166.4 489.9 L164.3 495.6 L161.3 493.9 L157.3 492.1 L158.2 488.5 L160.3 488.1 L165.2 488.5Z"/><path d="M781.4 134.6 L778.7 139.1 L773.1 139.6 L769.2 132.6 L773.0 131.2 L778.0 128.1Z"/><path d="M877.5 165.9 L875.7 168.6 L869.1 166.2 L869.5 163.6 L874.2 161.6Z"/><path d="M488.9 217.2 L487.8 220.5 L483.5 218.5 L483.2 215.0 L487.1 215.1Z"/><path d="M190.7 143.3 L186.7 146.3 L181.9 147.3 L177.0 144.0 L180.5 135.5 L185.0 137.6Z"/><path d="M653.5 489.2 L652.3 492.8 L648.0 493.4 L644.9 492.2 L645.5 489.3 L647.7 487.2 L651.6 488.4Z"/><path d="M751.9 121.7 L750.5 124.4 L743.7 124.3 L741.0 120.5 L745.0 115.5 L749.7 117.0Z"/><path d="M614.5 235.3 L609.6 242.2 L603.1 239.3 L602.3 234.3 L610.7 232.2Z"/><path d="M537.3 340.7 L535.1 348.5 L526.6 345.5 L528.2 337.7 L535.1 336.8Z"/><path d="M118.0 536.7 L112.7 541.4 L107.8 539.8 L105.0 538.2 L107.7 530.8 L114.2 531.7Z"/><path d="M386.9 443.0 L383.0 447.3 L377.8 447.5 L376.8 442.5 L382.0 439.0Z"/><path d="M942.7 339.3 L942.4 342.8 L936.9 342.8 L933.3 338.6 L937.4 336.1 L941.0 337.0Z"/><path d="M731.6 275.8 L730.7 278.8 L726.6 279.9 L724.4 275.6 L725.1 272.9 L730.3 272.0Z"/><path d="M716.7 87.7 L711.8 94.6 L705.1 93.3 L701.5 89.1 L706.2 81.6 L711.8 85.2Z"/><path d="M259.1 369.7 L253.6 373.1 L247.5 374.0 L243.4 373.1 L243.0 367.3 L249.6 363.8 L254.2 365.2Z"/><path d="M565.6 381.0 L563.9 385.0 L557.6 383.4 L556.9 380.2 L558.8 376.6 L563.8 378.0Z"/><path d="M18.7 82.2 L18.5 85.0 L12.4 85.7 L10.8 82.6 L12.0 80.2 L14.3 77.9 L18.6 79.4Z"/><path d="M594.3 272.0 L592.5 275.2 L584.0 275.1 L583.4 271.9 L586.2 268.0 L592.9 267.2Z"/><path d="M853.7 128.3 L853.6 131.9 L848.5 133.0 L845.1 129.1 L848.1 125.9 L851.7 126.1Z"/><path d="M627.0 76.1 L625.6 79.4 L622.0 78.4 L620.6 75.8 L621.4 74.0 L625.2 74.0Z"/><path d="M349.1 116.4 L349.4 120.3 L344.0 122.1 L341.1 117.2 L342.1 114.5 L344.3 111.2 L348.5 113.2Z"/><path d="M228.6 341.5 L226.1 346.6 L220.5 348.2 L215.8 342.4 L220.0 337.6 L227.6 338.1Z"/><path d="M207.9 362.1 L207.3 365.6 L204.2 365.9 L197.4 363.6 L199.4 360.5 L202.5 357.0 L207.1 357.9Z"/><path d="M142.4 509.6 L142.0 513.8 L138.6 514.4 L135.6 510.6 L134.7 509.0 L137.2 505.2 L142.5 507.8Z"/><path d="M157.5 111.8 L152.8 115.9 L148.8 115.5 L146.9 109.6 L154.6 104.7Z"/><path d="M831.6 436.2 L831.1 439.8 L825.4 441.2 L823.9 436.9 L826.6 433.6 L829.1 431.5Z"/><path d="M265.5 70.6 L263.5 74.3 L258.6 76.6 L253.3 70.2 L258.3 65.0 L263.6 66.6Z"/><path d="M545.1 233.7 L541.6 238.6 L533.7 235.4 L534.4 230.5 L541.2 227.0Z"/><path d="M434.7 511.3 L432.6 514.7 L422.2 515.8 L423.2 509.5 L425.8 504.1 L431.0 503.4Z"/><path d="M248.3 494.9 L246.9 496.9 L243.7 497.7 L242.1 494.1 L243.2 490.7 L247.7 490.9Z"/><path d="M514.7 259.2 L513.5 262.1 L508.6 262.4 L506.0 261.2 L504.8 256.8 L508.1 255.4 L512.4 256.2Z"/><path d="M70.1 435.7 L68.8 437.2 L66.3 438.7 L64.9 436.8 L63.9 434.2 L66.8 432.0 L69.5 432.4Z"/><path d="M532.1 511.4 L529.5 515.0 L525.2 513.3 L524.4 509.4 L529.7 509.8Z"/><path d="M203.6 354.9 L204.1 358.6 L198.1 360.1 L193.2 353.6 L197.1 351.2 L202.6 348.6Z"/><path d="M617.2 452.0 L616.7 454.3 L612.1 454.4 L608.1 452.7 L607.9 450.3 L612.7 448.4 L614.7 447.3Z"/><path d="M306.3 207.4 L303.6 211.6 L299.2 211.5 L298.0 208.7 L301.4 205.5 L304.6 205.4Z"/><path d="M850.1 437.3 L849.4 441.2 L844.5 444.2 L839.2 438.2 L838.6 433.7 L841.3 431.1 L848.8 433.7Z"/><path d="M27.0 467.3 L20.5 473.1 L13.7 469.5 L13.2 464.2 L19.6 461.4Z"/><path d="M453.7 416.3 L450.4 421.0 L442.4 420.5 L443.7 415.1 L448.2 413.3Z"/><path d="M228.5 116.1 L225.9 119.4 L220.3 119.0 L222.1 113.7 L225.3 112.6Z"/><path d="M55.1 224.1 L52.7 231.5 L43.7 228.1 L42.3 221.1 L52.8 220.2Z"/><path d="M669.1 466.5 L666.7 470.9 L662.5 473.1 L656.9 468.8 L658.5 465.6 L663.0 459.8 L667.7 463.6Z"/><path d="M267.2 327.4 L265.0 333.6 L260.2 332.5 L257.5 330.3 L257.0 326.6 L261.8 322.6 L265.9 325.7Z"/><path d="M755.7 312.9 L753.3 318.1 L749.2 319.2 L746.2 317.3 L746.8 311.8 L750.1 310.6 L753.5 311.3Z"/><path d="M618.1 524.1 L614.6 526.2 L610.1 527.6 L609.7 523.8 L610.6 520.0 L615.8 520.4Z"/><path d="M839.3 73.0 L839.1 76.1 L833.5 76.5 L831.7 72.1 L833.4 70.1 L837.7 68.4Z"/><path d="M243.3 418.6 L238.6 423.0 L229.5 425.2 L228.2 423.0 L226.5 415.4 L233.6 413.7 L236.7 414.3Z"/><path d="M718.9 219.8 L713.1 227.1 L706.4 223.6 L703.3 218.4 L713.4 215.5Z"/><path d="M326.5 180.5 L326.2 183.4 L318.3 184.6 L314.8 183.7 L312.0 178.1 L319.3 173.7 L323.9 175.0Z"/><path d="M607.7 394.3 L603.9 401.4 L596.1 396.9 L596.3 391.9 L606.2 388.7Z"/><path d="M937.1 287.1 L929.9 294.8 L923.8 291.0 L923.3 285.9 L930.8 284.7Z"/><path d="M670.3 473.0 L667.4 476.4 L662.5 476.7 L661.0 473.1 L662.9 468.0 L667.6 468.7Z"/><path d="M694.7 337.5 L691.8 339.1 L689.0 339.1 L686.5 338.0 L687.1 334.2 L688.4 331.8 L694.0 332.6Z"/><path d="M214.7 362.1 L212.1 364.0 L208.5 364.0 L207.1 361.6 L208.3 358.3 L213.8 358.4Z"/><path d="M868.1 134.1 L866.7 138.0 L861.5 135.5 L861.7 133.6 L866.1 132.3Z"/><path d="M118.2 505.4 L115.6 510.6 L110.3 508.8 L108.4 504.3 L113.8 501.0Z"/><path d="M149.5 80.2 L146.5 82.4 L143.0 83.0 L142.7 79.3 L143.0 76.7 L147.6 77.5Z"/><path d="M667.9 364.5 L663.3 369.7 L656.8 370.0 L655.8 367.2 L657.8 362.8 L662.4 361.8Z"/><path d="M707.6 98.5 L706.0 101.1 L700.1 100.7 L696.3 99.9 L697.3 95.9 L700.3 90.7 L704.4 93.2Z"/><path d="M361.1 451.7 L354.9 457.6 L350.8 458.5 L345.3 456.6 L346.3 451.3 L352.1 448.5 L357.3 449.2Z"/><path d="M854.2 95.9 L850.8 101.1 L844.7 102.1 L840.6 97.2 L844.5 92.7 L851.2 90.9Z"/><path d="M872.0 513.2 L869.1 516.0 L864.4 516.0 L863.9 511.8 L868.1 510.2Z"/><path d="M208.9 118.5 L206.1 121.5 L202.6 121.8 L201.6 118.6 L202.2 116.1 L206.5 115.5Z"/><path d="M811.2 451.3 L809.4 453.4 L804.3 455.6 L798.9 453.3 L800.8 448.9 L803.4 444.7 L809.4 448.0Z"/><path d="M789.9 364.1 L785.3 369.2 L778.9 367.1 L782.3 362.9 L786.6 361.1Z"/><path d="M112.9 111.0 L111.6 118.2 L104.6 117.2 L100.2 113.5 L100.4 109.5 L104.1 106.9 L110.2 106.0Z"/><path d="M210.9 216.1 L205.8 222.1 L201.4 220.6 L202.4 214.7 L205.7 213.9Z"/><path d="M37.4 187.7 L33.1 192.7 L29.8 189.7 L29.9 185.3 L34.6 184.2Z"/><path d="M688.2 240.5 L683.8 243.4 L678.3 244.5 L679.1 238.7 L684.7 236.7Z"/><path d="M919.9 306.3 L917.9 309.4 L910.3 308.1 L910.1 302.3 L918.1 299.5Z"/><path d="M596.9 81.3 L593.3 84.2 L589.6 84.3 L586.1 82.7 L587.7 78.5 L589.2 75.4 L596.1 76.8Z"/><path d="M425.7 433.0 L424.0 436.7 L417.4 435.4 L417.9 428.8 L421.6 427.6Z"/><path d="M676.4 321.3 L673.4 325.2 L669.0 322.6 L668.4 318.9 L673.1 317.1Z"/><path d="M824.6 109.1 L822.9 113.4 L815.5 114.1 L813.9 109.6 L816.4 104.7 L820.7 104.8Z"/><path d="M177.3 65.3 L173.8 69.7 L171.5 70.0 L168.3 69.7 L169.4 64.6 L170.6 62.6 L175.4 64.1Z"/><path d="M728.4 528.9 L727.0 532.9 L724.3 532.0 L721.9 528.9 L724.2 525.9 L728.0 527.5Z"/><path d="M479.7 297.1 L473.3 304.8 L464.1 301.9 L467.9 296.0 L474.2 293.5Z"/><path d="M191.0 300.4 L185.6 305.0 L182.3 302.7 L183.1 297.9 L187.7 295.5Z"/><path d="M797.4 190.3 L794.5 197.3 L789.8 196.5 L785.3 193.5 L783.8 185.9 L789.1 184.9 L794.1 183.3Z"/><path d="M284.6 169.0 L282.4 174.1 L272.6 172.7 L273.7 164.0 L280.7 163.2Z"/><path d="M486.5 117.9 L482.8 121.0 L478.9 122.7 L474.0 120.8 L474.2 115.2 L477.6 113.1 L484.5 113.6Z"/><path d="M95.4 440.7 L93.8 444.8 L86.5 443.8 L81.4 437.5 L83.3 434.2 L94.2 434.8Z"/><path d="M752.8 363.7 L752.2 366.2 L747.1 367.9 L744.7 367.0 L745.4 362.3 L747.3 360.2 L752.6 360.7Z"/><path d="M397.4 253.5 L390.9 260.2 L383.5 258.9 L380.3 255.0 L384.5 246.8 L391.0 249.1Z"/><path d="M97.1 486.7 L95.3 490.1 L93.0 489.8 L89.6 487.7 L91.2 486.3 L93.8 484.4 L95.7 485.6Z"/><path d="M214.0 192.0 L210.6 196.6 L202.4 198.4 L198.3 192.4 L200.3 187.6 L203.0 184.3 L209.9 184.2Z"/><path d="M488.1 246.2 L484.9 251.2 L475.9 247.8 L474.6 242.9 L484.5 239.8Z"/><path d="M238.4 284.8 L232.5 288.0 L227.1 287.8 L224.8 281.9 L232.9 279.3Z"/><path d="M725.5 421.1 L721.5 427.0 L714.1 427.3 L715.1 419.8 L719.8 416.4Z"/><path d="M342.8 221.8 L342.7 223.7 L337.5 224.4 L336.1 222.4 L335.2 219.4 L337.4 217.9 L340.4 217.9Z"/><path d="M809.0 379.4 L804.4 384.3 L793.9 382.4 L796.5 374.6 L803.8 373.3Z"/><path d="M178.3 275.4 L174.6 277.9 L170.5 281.2 L167.8 277.1 L163.4 272.1 L169.3 266.7 L174.0 270.2Z"/><path d="M560.4 126.6 L557.8 129.0 L554.4 131.5 L548.9 128.4 L550.0 124.3 L553.2 120.4 L558.4 123.0Z"/><path d="M845.3 178.9 L843.6 181.6 L839.5 182.3 L838.1 180.5 L837.0 176.3 L840.1 174.7 L842.4 176.6Z"/><path d="M303.5 398.3 L301.5 404.4 L293.6 404.1 L288.5 403.2 L289.8 395.3 L293.7 391.9 L297.1 394.3Z"/><path d="M161.1 139.0 L158.1 143.1 L153.3 142.6 L153.4 138.3 L160.2 136.0Z"/><path d="M323.0 314.7 L321.9 316.5 L317.0 316.6 L313.6 313.4 L317.5 310.9 L319.8 311.0Z"/><path d="M327.6 155.5 L323.4 161.8 L317.2 159.9 L311.4 157.3 L311.5 152.2 L316.9 150.1 L326.2 150.1Z"/><path d="M699.8 114.5 L699.1 121.5 L691.6 118.7 L688.1 114.6 L691.0 107.6 L698.0 108.2Z"/><path d="M115.7 250.0 L112.8 253.7 L106.1 256.2 L101.8 249.0 L101.4 245.6 L106.2 240.6 L114.1 241.6Z"/><path d="M762.8 414.8 L759.5 416.2 L756.5 417.7 L752.2 416.7 L750.7 411.9 L755.2 408.7 L759.4 409.0Z"/><path d="M199.5 368.6 L199.4 371.6 L196.0 371.0 L193.0 369.0 L193.1 366.6 L194.3 365.0 L200.2 365.9Z"/><path d="M210.0 249.6 L206.1 252.5 L204.1 252.4 L202.8 248.3 L206.4 246.3Z"/><path d="M393.2 440.3 L387.7 445.2 L383.1 444.1 L378.6 439.5 L381.8 434.7 L388.2 436.6Z"/><path d="M485.8 364.7 L483.0 370.3 L478.8 369.4 L475.9 369.8 L475.7 364.2 L479.3 360.9 L486.4 362.1Z"/><path d="M151.6 351.4 L149.6 354.7 L143.5 355.6 L141.0 354.6 L140.1 350.7 L145.1 348.7 L148.7 350.1Z"/><path d="M709.7 495.9 L708.1 501.3 L703.4 501.6 L701.9 498.2 L700.1 495.1 L705.5 490.5 L709.2 491.7Z"/><path d="M555.9 421.6 L552.6 425.1 L546.8 423.9 L546.0 420.4 L547.1 416.8 L551.7 415.5Z"/><path d="M233.4 407.8 L228.7 413.7 L224.1 415.0 L219.5 407.1 L222.0 403.8 L231.0 402.4Z"/><path d="M741.6 397.0 L740.4 403.6 L736.0 402.3 L731.5 400.4 L728.8 393.9 L734.7 393.5 L740.6 394.4Z"/></g>
<g fill="#a7cde9"><path d="M635.0 340.0 C637.3 340.0 649.4 338.4 652.5 340.0 C655.6 341.6 656.1 348.7 658.0 352.0 C659.9 355.3 664.5 359.3 667.0 365.0 C669.5 370.7 674.6 387.7 677.0 395.0 C679.4 402.3 681.9 413.3 685.0 420.0 C688.1 426.7 696.4 439.0 700.0 445.0 C703.6 451.0 709.3 460.7 712.0 465.0 C714.7 469.3 717.6 474.2 720.0 477.5 C722.4 480.8 726.0 486.7 730.0 490.0 C734.0 493.3 744.0 499.5 750.0 502.5 C756.0 505.5 768.3 509.5 775.0 512.5 C781.7 515.5 793.7 521.3 800.0 525.0 C806.3 528.7 830.2 538.0 822.5 540.0 C814.8 542.0 753.4 541.3 742.0 540.0 C730.6 538.7 741.8 532.7 737.0 530.0 C732.2 527.3 711.6 522.0 706.0 520.0 C700.4 518.0 697.5 517.3 695.0 515.0 C692.5 512.7 689.2 507.5 687.5 502.5 C685.8 497.5 683.8 484.2 682.5 477.5 C681.2 470.8 680.2 457.5 677.5 452.5 C674.8 447.5 665.5 443.7 662.5 440.0 C659.5 436.3 657.7 431.7 655.0 425.0 C652.3 418.3 645.5 397.0 642.5 390.0 C639.5 383.0 633.2 377.2 632.5 372.5 C631.8 367.8 637.2 359.3 637.5 355.0 C637.8 350.7 635.3 342.0 635.0 340.0Z"/><path d="M778.2 326.9 C779.5 327.4 784.8 328.4 787.6 330.7 C790.4 333.0 795.9 340.6 798.9 343.9 C801.9 347.2 807.9 351.6 810.2 355.1 C812.5 358.6 814.3 365.9 815.8 370.2 C817.3 374.5 819.2 384.1 821.5 387.1 C823.8 390.1 830.9 391.0 832.8 392.8 C834.7 394.6 835.9 398.3 835.6 400.3 C835.3 402.3 832.5 406.1 830.9 407.8 C829.3 409.5 824.9 412.1 823.4 413.4 C821.9 414.7 820.9 417.9 819.6 417.2 C818.3 416.5 815.8 411.6 814.0 407.8 C812.2 404.0 809.2 394.0 806.4 389.0 C803.6 384.0 797.1 374.7 793.3 370.2 C789.5 365.7 781.1 358.9 778.2 355.1 C775.3 351.3 772.2 345.3 771.6 342.0 C771.0 338.7 772.6 332.7 773.5 330.7 C774.4 328.7 777.6 327.4 778.2 326.9Z"/><path d="M245.9 422.6 C246.7 423.2 250.4 425.0 252.0 427.0 C253.6 429.0 255.9 431.8 257.6 437.7 C259.3 443.6 262.1 462.4 264.4 471.4 C266.7 480.4 272.7 498.7 274.5 505.0 C276.3 511.3 277.9 513.9 277.8 518.6 C277.7 523.3 276.2 537.1 274.0 540.0 C271.8 542.9 263.4 543.8 261.0 540.0 C258.6 536.2 258.0 520.1 256.0 511.8 C254.0 503.5 247.9 486.5 245.9 478.0 C243.9 469.5 241.7 454.1 240.8 447.8 C239.9 441.5 238.3 434.4 239.0 431.0 C239.7 427.6 245.0 423.7 245.9 422.6Z"/><path d="M917.5 342.5 C918.5 343.2 923.0 346.0 925.0 348.0 C927.0 350.0 931.0 354.6 932.5 357.5 C934.0 360.4 936.0 367.3 936.0 370.0 C936.0 372.7 934.6 376.0 932.5 377.5 C930.4 379.0 922.3 381.7 920.0 381.0 C917.7 380.3 916.3 376.6 915.0 372.5 C913.7 368.4 909.7 354.0 910.0 350.0 C910.3 346.0 916.5 343.5 917.5 342.5Z"/><path d="M589.0 501.0 C589.7 500.7 592.0 497.7 594.0 499.0 C596.0 500.3 602.8 508.9 604.0 511.0 C605.2 513.1 604.1 515.0 603.0 515.0 C601.9 515.0 597.9 512.9 596.0 511.0 C594.1 509.1 589.9 502.3 589.0 501.0Z"/><path d="M577.0 226.0 C577.7 225.6 580.8 223.9 582.0 223.0 C583.2 222.1 584.9 219.5 586.0 219.0 C587.1 218.5 589.6 218.7 590.0 219.5 C590.4 220.3 589.9 223.9 589.0 225.0 C588.1 226.1 584.5 227.1 583.0 227.5 C581.5 227.9 578.8 228.2 578.0 228.0 C577.2 227.8 577.1 226.3 577.0 226.0Z"/></g>
<g fill="none" stroke="#9ecae8" stroke-width="1.8" stroke-linejoin="round" stroke-linecap="round"><path d="M278.0 66.0 C278.3 69.0 278.8 78.0 279.7 84.0 C280.6 90.0 281.8 97.0 283.3 101.7 C284.8 106.5 288.4 109.8 288.7 112.5 C289.0 115.2 289.2 115.3 285.0 117.8 C280.8 120.3 270.1 125.3 263.6 127.7 C257.1 130.1 250.9 130.8 245.8 132.0 C240.7 133.2 235.9 133.0 233.2 134.8 C230.5 136.6 232.4 139.2 229.7 142.9 C227.0 146.6 219.1 154.8 217.0 157.2" stroke-width="3"/><path d="M285.0 123.2 C284.1 124.4 282.4 127.4 279.7 130.4 C277.0 133.4 269.9 136.2 269.0 141.0 C268.1 145.8 273.8 153.6 274.4 159.0 C275.0 164.4 269.6 170.2 272.6 173.3 C275.6 176.4 287.1 174.3 292.5 177.5 C297.9 180.7 303.8 187.1 305.0 192.5 C306.2 197.9 301.7 205.0 300.0 210.0 C298.3 215.0 293.8 219.3 295.0 222.5 C296.2 225.7 304.6 226.1 307.5 229.0 C310.4 231.9 309.2 236.9 312.5 240.0 C315.8 243.1 322.9 243.3 327.5 247.5 C332.1 251.7 336.2 259.2 340.0 265.0 C343.8 270.8 346.0 277.9 350.0 282.5 C354.0 287.1 361.5 287.9 364.0 292.5 C366.5 297.1 365.2 306.1 365.0 310.0 C364.8 313.9 362.9 315.0 362.5 316.0"/><path d="M377.0 324.1 C378.9 323.4 385.9 320.1 388.3 319.9 C390.7 319.7 391.7 321.3 391.2 322.7 C390.7 324.1 386.0 325.9 385.5 328.3 C385.0 330.7 386.2 336.3 388.3 336.8 C390.4 337.3 396.6 331.2 398.2 331.2 C399.8 331.2 397.2 334.2 398.2 336.8 C399.1 339.4 401.8 343.9 403.9 346.7 C406.0 349.5 409.5 351.3 410.9 353.7 C412.3 356.1 413.2 360.3 412.3 360.8 C411.4 361.3 407.7 357.2 405.3 356.5 C402.9 355.8 399.6 355.8 398.2 356.5 C396.8 357.2 396.1 359.2 396.8 360.8 C397.5 362.4 401.2 364.0 402.4 366.4 C403.6 368.8 403.8 371.7 404.0 375.0 C404.2 378.3 401.8 382.9 403.9 386.2 C406.0 389.5 412.3 392.5 416.5 394.6 C420.7 396.7 425.3 397.2 429.2 398.9 C433.1 400.6 437.7 401.5 440.0 405.0 C442.3 408.5 441.8 414.2 443.0 420.0 C444.2 425.8 444.7 432.5 447.5 440.0 C450.3 447.5 456.2 456.7 460.0 465.0 C463.8 473.3 467.1 481.7 470.0 490.0 C472.9 498.3 475.0 506.7 477.5 515.0 C480.0 523.3 483.8 535.8 485.0 540.0"/><path d="M311.9 126.8 C316.4 127.7 329.8 130.2 338.7 132.1 C347.6 134.0 360.1 135.4 365.5 138.4 C370.9 141.4 370.4 143.9 370.9 150.0 C371.4 156.1 367.8 169.2 368.5 175.0 C369.2 180.8 373.0 183.6 375.0 184.5 C377.0 185.4 377.9 181.0 380.7 180.7 C383.5 180.4 388.9 180.1 392.0 182.6 C395.1 185.1 397.0 191.4 399.5 195.8 C402.0 200.2 403.2 204.6 407.0 209.0 C410.8 213.4 416.3 220.1 422.0 222.0 C427.7 223.9 436.6 219.2 441.0 220.2 C445.4 221.1 444.0 225.5 448.4 227.7 C452.8 229.9 462.0 230.2 467.3 233.4 C472.6 236.6 477.6 242.2 480.4 246.6 C483.2 251.0 483.9 255.8 484.2 259.7 C484.5 263.6 482.6 268.3 482.3 270.0"/><path d="M492.5 280.0 C495.8 279.6 506.7 280.0 512.5 277.5 C518.3 275.0 523.3 266.7 527.5 265.0 C531.7 263.3 533.8 266.0 537.5 267.5 C541.2 269.0 544.6 272.8 550.0 274.0 C555.4 275.2 563.3 273.3 570.0 275.0 C576.7 276.7 583.3 281.7 590.0 284.0 C596.7 286.3 603.8 286.3 610.0 289.0 C616.2 291.7 622.5 294.8 627.5 300.0 C632.5 305.2 637.9 316.7 640.0 320.0"/><path d="M621.7 70.3 C621.0 71.7 622.4 74.2 617.5 78.7 C612.6 83.2 597.5 92.6 592.5 97.4 C587.5 102.2 587.3 104.3 587.3 107.8 C587.3 111.3 590.6 114.8 592.5 118.2 C594.4 121.7 595.6 125.2 598.8 128.7 C601.9 132.2 609.2 137.3 611.2 139.0"/><path d="M601.5 130.0 C602.2 131.1 602.9 134.4 605.8 136.6 C608.7 138.8 615.0 138.4 619.0 143.2 C623.0 147.9 626.0 157.8 630.0 165.1 C634.0 172.4 638.8 180.1 643.2 187.0 C647.6 193.9 652.6 201.7 656.3 206.8 C659.9 211.9 662.8 214.6 665.1 217.8 C667.4 221.0 668.2 223.4 670.0 226.0 C671.8 228.6 675.5 228.7 676.1 233.2 C676.8 237.7 672.4 248.2 673.9 252.9 C675.4 257.6 679.7 258.8 684.9 261.7 C690.1 264.6 697.5 266.9 705.0 270.0 C712.5 273.1 724.2 275.8 730.0 280.0 C735.8 284.2 737.1 290.4 740.0 295.0 C742.9 299.6 743.3 303.8 747.5 307.5 C751.7 311.2 760.4 314.2 765.0 317.5 C769.6 320.8 773.3 325.8 775.0 327.5"/><path d="M709.0 66.2 C711.8 66.9 717.1 69.6 725.8 70.3 C734.5 71.0 752.0 68.7 761.0 70.3 C770.0 71.9 772.7 78.1 780.0 79.7 C787.3 81.3 800.0 77.5 805.0 80.0 C810.0 82.5 806.7 89.6 810.0 95.0 C813.3 100.4 820.8 106.2 825.0 112.5 C829.2 118.8 832.9 125.4 835.0 132.5 C837.1 139.6 833.3 150.0 837.5 155.0 C841.7 160.0 856.2 161.2 860.0 162.5"/><path d="M840.0 161.0 C842.9 161.2 853.5 159.8 857.5 162.5 C861.5 165.2 861.8 176.2 864.0 177.5 C866.2 178.8 866.7 172.5 871.0 170.0 C875.3 167.5 885.2 161.8 890.0 162.5 C894.8 163.2 895.0 170.2 900.0 174.0 C905.0 177.8 913.8 182.8 920.0 185.0 C926.2 187.2 934.6 187.1 937.5 187.5"/><path d="M102.5 317.5 C102.1 319.2 103.3 324.6 100.0 327.5 C96.7 330.4 88.8 332.8 82.5 335.0 C76.2 337.2 65.8 340.0 62.5 341.0"/><path d="M57.5 357.0 C58.1 361.2 59.9 372.0 61.0 382.5 C62.1 393.0 64.0 407.2 64.0 420.0 C64.0 432.8 61.8 451.1 61.0 459.0 C60.2 466.9 59.2 464.4 59.0 467.5 C58.8 470.6 60.2 473.8 60.0 477.5 C59.8 481.2 56.7 484.6 57.5 490.0 C58.3 495.4 62.2 501.7 65.0 510.0 C67.8 518.3 72.5 535.0 74.0 540.0"/><path d="M645.0 482.5 C646.2 484.2 650.8 489.6 652.5 492.5 C654.2 495.4 654.6 498.8 655.0 500.0"/><path d="M750.0 312.8 C752.5 313.3 760.6 313.2 765.0 315.6 C769.4 318.0 774.4 325.0 776.3 326.9"/><path d="M814.0 364.5 C815.9 366.1 821.8 372.1 825.2 374.0 C828.6 375.9 831.5 376.4 834.6 375.8 C837.7 375.2 840.5 370.8 844.0 370.2 C847.5 369.6 849.7 371.0 855.3 372.0 C860.9 373.0 870.5 373.8 877.5 376.0 C884.5 378.2 890.4 383.9 897.5 385.0 C904.6 386.1 916.2 382.9 920.0 382.5"/><path d="M920.0 382.5 C920.4 384.2 920.8 389.2 922.5 392.5 C924.2 395.8 928.8 400.8 930.0 402.5"/><path d="M935.0 377.5 L947.5 387.5"/><path d="M615.0 365.0 L612.5 372.5"/><path d="M13.0 335.0 L16.0 350.0"/></g>
<g fill="none" stroke="#585858" stroke-width="2.3" stroke-linejoin="round" stroke-linecap="round"><path d="M13.0 120.0 L18.0 118.0"/><path d="M217.0 142.9 C217.9 141.6 220.1 136.4 222.5 134.8 C224.9 133.2 229.1 133.2 231.5 133.6 C233.9 134.0 233.6 136.5 236.8 137.5 C240.0 138.5 248.5 139.4 250.8 139.8"/><path d="M250.8 139.8 C247.6 142.7 237.1 153.3 231.5 157.2 C225.9 161.1 219.4 162.4 217.0 163.4"/><path d="M250.8 139.8 C252.6 139.0 256.7 137.1 261.8 134.8 C266.9 132.5 274.8 128.3 281.5 125.9 C288.2 123.5 296.0 120.0 302.0 120.5 C308.0 121.0 313.0 125.9 317.3 128.6 C321.6 131.3 323.8 135.7 328.0 136.6 C332.2 137.5 337.2 134.0 342.3 134.0 C347.4 134.0 354.5 134.8 358.4 136.6 C362.3 138.4 364.2 142.9 365.5 144.7 C366.8 146.5 365.8 146.9 365.9 147.3"/><path d="M302.0 120.5 C301.0 118.9 298.0 114.1 295.8 110.7 C293.6 107.3 290.3 103.9 288.7 100.0 C287.1 96.1 286.2 92.4 286.0 87.5 C285.8 82.6 287.0 73.3 287.2 70.5"/><path d="M250.8 139.8 C250.7 142.4 250.0 148.7 250.2 155.4 C250.4 162.1 250.4 169.4 252.0 180.0 C253.6 190.6 257.7 206.5 260.0 219.0 C262.3 231.5 265.6 248.0 266.0 255.0 C266.4 262.0 265.6 256.8 262.5 261.0 C259.4 265.2 250.8 275.0 247.5 280.0 C244.2 285.0 243.3 289.2 242.5 291.0"/><path d="M365.9 147.3 C365.2 148.7 362.4 152.3 362.0 155.4 C361.6 158.5 361.5 162.6 363.7 166.0 C365.9 169.4 373.4 174.3 375.4 176.0"/><path d="M375.4 176.0 C378.5 178.7 389.2 186.2 393.9 192.0 C398.5 197.8 400.2 206.4 403.3 210.8 C406.4 215.2 407.4 215.2 412.7 218.3 C418.0 221.4 427.8 225.5 435.3 229.6 C442.8 233.7 451.6 238.1 457.9 242.8 C464.2 247.5 468.8 253.4 472.9 257.9 C477.0 262.4 480.7 268.0 482.3 270.0"/><path d="M375.4 176.0 C377.5 176.5 381.7 174.9 388.2 178.8 C394.7 182.7 408.3 195.9 414.6 199.5 C420.9 203.1 422.1 201.1 425.9 200.5 C429.7 199.9 430.3 198.8 437.2 195.8 C444.1 192.8 456.8 184.2 467.3 182.6 C477.8 181.0 491.2 185.4 500.0 186.3 C508.8 187.2 513.3 185.7 520.0 188.0 C526.7 190.3 534.5 196.3 540.0 200.2 C545.5 204.1 547.0 205.7 553.2 211.2 C559.4 216.7 570.3 228.1 577.3 233.2 C584.2 238.3 588.7 239.3 594.9 242.0 C601.1 244.7 608.0 248.3 614.6 249.6 C621.2 250.9 629.3 248.1 634.4 249.6 C639.5 251.1 643.6 256.9 645.4 258.4"/><path d="M262.5 261.0 C266.2 259.6 278.8 256.8 285.0 252.5 C291.2 248.2 295.8 238.3 300.0 235.0 C304.2 231.7 304.2 233.3 310.0 232.5 C315.8 231.7 330.8 230.4 335.0 230.0"/><path d="M242.5 291.0 L215.0 296.0"/><path d="M242.5 291.0 C247.9 295.4 267.5 310.6 275.0 317.5 C282.5 324.4 282.5 326.7 287.5 332.5 C292.5 338.3 299.4 346.2 305.0 352.5 C310.6 358.8 316.8 365.8 321.0 370.0 C325.2 374.2 324.3 371.2 330.0 377.5 C335.7 383.8 348.3 397.1 355.0 407.5 C361.7 417.9 365.4 431.2 370.0 440.0 C374.6 448.8 376.8 451.0 382.5 460.0 C388.2 469.0 396.9 483.2 404.0 494.0 C411.1 504.8 420.5 517.3 425.0 525.0 C429.5 532.7 430.0 537.5 431.0 540.0"/><path d="M330.0 377.0 C331.2 376.2 333.3 372.0 337.5 372.5 C341.7 373.0 349.6 380.8 355.0 380.0 C360.4 379.2 366.7 371.2 370.0 367.5 C373.3 363.8 372.9 358.8 375.0 357.5 C377.1 356.2 379.6 357.5 382.5 360.0 C385.4 362.5 389.6 370.2 392.5 372.5 C395.4 374.8 398.8 373.8 400.0 374.0"/><path d="M400.3 374.2 C402.3 372.7 409.4 367.0 412.3 365.0 C415.2 363.0 416.6 363.4 418.0 362.2 C419.4 361.0 420.1 360.1 420.8 358.0 C421.5 355.9 421.7 351.4 422.2 349.5 C422.7 347.6 423.4 345.5 423.6 346.7 C423.8 347.9 422.9 355.1 423.6 356.5 C424.3 357.9 425.9 356.6 427.8 355.1 C429.7 353.6 433.7 348.7 434.9 347.4"/><path d="M101.0 330.0 C101.7 327.9 103.9 319.8 105.0 317.5 C106.1 315.2 107.1 316.2 107.5 316.0"/><path d="M101.0 330.0 C96.7 332.5 83.5 338.8 75.0 345.0 C66.5 351.2 56.7 360.4 50.0 367.5 C43.3 374.6 37.9 381.2 35.0 387.5 C32.1 393.8 34.6 401.1 32.5 405.0 C30.4 408.9 25.8 408.8 22.5 411.0 C19.2 413.2 14.6 416.8 13.0 418.0"/><path d="M101.0 330.0 C102.5 331.2 106.0 334.2 110.0 337.5 C114.0 340.8 120.8 344.6 125.0 350.0 C129.2 355.4 133.2 361.7 135.0 370.0 C136.8 378.3 135.8 390.4 136.0 400.0 C136.2 409.6 134.7 419.9 136.0 427.5 C137.3 435.1 141.7 440.5 144.0 445.5 C146.3 450.5 145.7 450.9 150.0 457.5 C154.3 464.1 165.8 480.0 170.0 485.0 C174.2 490.0 173.3 487.9 175.0 487.5 C176.7 487.1 177.5 482.2 180.0 482.5 C182.5 482.8 187.1 486.5 190.0 489.0 C192.9 491.5 193.7 493.7 197.5 497.5 C201.3 501.3 209.1 506.2 213.0 511.8 C216.9 517.3 219.3 526.3 221.0 531.0 C222.7 535.7 222.7 538.5 223.0 540.0"/><path d="M52.0 341.0 C52.9 343.3 54.9 348.1 57.5 355.0 C60.1 361.9 65.6 375.4 67.5 382.5 C69.4 389.6 69.4 391.7 69.0 397.5 C68.6 403.3 65.8 411.2 65.0 417.5 C64.2 423.8 64.5 430.9 64.0 435.0 C63.5 439.1 62.3 440.8 62.0 442.0"/><path d="M205.0 316.0 C203.8 319.6 199.8 331.0 197.5 337.5 C195.2 344.0 192.3 348.9 191.0 355.0 C189.7 361.1 188.0 368.6 189.5 374.0 C191.0 379.4 195.3 380.7 200.0 387.5 C204.7 394.3 212.1 405.8 217.5 415.0 C222.9 424.2 229.4 436.2 232.5 442.5 C235.6 448.8 235.2 449.2 236.0 453.0 C236.8 456.8 236.8 458.8 237.5 465.0 C238.2 471.2 239.2 484.0 240.0 490.0 C240.8 496.0 240.8 496.8 242.0 501.0 C243.2 505.2 244.5 508.5 247.5 515.0 C250.5 521.5 257.9 535.8 260.0 540.0"/><path d="M440.0 89.0 C440.8 89.6 432.5 87.5 445.0 92.5 C457.5 97.5 500.8 113.7 515.0 119.0 C529.2 124.3 525.0 121.8 530.0 124.5 C535.0 127.2 541.1 131.7 545.0 135.0 C548.9 138.3 544.9 141.8 553.2 144.3 C561.5 146.8 586.4 147.5 594.9 149.8 C603.4 152.1 602.7 156.7 604.3 158.1"/><path d="M612.3 92.2 C611.4 93.8 610.0 94.5 607.0 101.6 C604.0 108.7 595.8 127.6 594.0 135.0 C592.2 142.4 594.3 142.2 596.0 146.0 C597.7 149.8 602.9 156.1 604.3 158.1 C605.7 160.1 602.9 155.8 604.3 158.1 C605.6 160.4 609.2 168.0 612.4 171.7 C615.6 175.4 619.7 176.8 623.4 180.5 C627.1 184.2 630.7 189.3 634.4 193.7 C638.1 198.1 641.8 202.4 645.4 206.8 C649.0 211.2 652.9 216.6 656.3 220.0 C659.6 223.4 664.0 226.0 665.5 227.2"/><path d="M612.3 92.2 C614.9 89.6 624.0 80.1 628.0 76.6 C632.0 73.1 635.0 73.2 636.3 71.4 C637.6 69.6 636.0 66.9 636.0 66.0"/><path d="M638.0 67.2 C641.2 68.1 647.6 71.8 657.0 72.4 C666.4 73.0 683.1 71.3 694.2 70.8 C705.3 70.2 715.0 67.5 723.8 69.3 C732.5 71.1 737.3 80.1 746.7 81.8 C756.1 83.5 771.1 78.8 780.0 79.7 C788.9 80.7 794.2 84.1 800.0 87.5 C805.8 90.9 810.5 95.1 815.0 100.0 C819.5 104.9 823.2 112.3 827.0 117.0 C830.8 121.7 836.2 126.2 838.0 128.0"/><path d="M822.5 66.0 C822.8 68.3 821.9 76.4 824.0 80.0 C826.1 83.6 829.0 85.7 835.0 87.5 C841.0 89.3 853.2 88.4 860.0 91.0 C866.8 93.6 873.3 101.0 876.0 103.0"/><path d="M855.0 106.0 C853.5 108.0 848.8 114.3 846.0 118.0 C843.2 121.7 840.0 123.5 838.0 128.0 C836.0 132.5 834.8 139.7 834.0 145.0 C833.2 150.3 833.0 150.8 833.0 160.0 C833.0 169.2 834.5 191.2 834.0 200.0 C833.5 208.8 833.2 209.2 830.0 212.5 C826.8 215.8 817.9 216.7 815.0 220.0 C812.1 223.3 814.3 228.5 812.5 232.5 C810.7 236.5 805.4 242.1 804.0 244.0"/><path d="M876.0 103.0 C877.9 103.5 883.5 109.0 887.5 106.0 C891.5 103.0 895.4 91.7 900.0 85.0 C904.6 78.3 912.5 69.2 915.0 66.0"/><path d="M899.0 86.0 L896.0 66.0"/><path d="M887.5 106.0 C892.9 105.2 910.8 100.5 920.0 101.0 C929.2 101.5 937.8 108.0 942.5 109.0 C947.2 110.0 947.1 107.3 948.0 107.0"/><path d="M887.5 106.0 C889.6 107.3 897.0 110.3 900.0 114.0 C903.0 117.7 904.2 123.2 905.5 128.0 C906.8 132.8 908.4 137.0 907.5 142.5 C906.6 148.0 901.4 156.4 900.0 161.0 C898.6 165.6 897.8 167.2 899.0 170.0 C900.2 172.8 902.8 175.4 907.5 177.5 C912.2 179.6 922.2 180.2 927.5 182.5 C932.8 184.8 937.1 187.8 939.0 191.0 C940.9 194.2 939.0 200.2 939.0 202.0"/><path d="M664.7 192.6 C664.2 194.2 662.1 198.2 661.8 202.4 C661.5 206.6 662.3 213.7 662.9 217.8 C663.5 221.9 665.1 225.6 665.5 227.2"/><path d="M693.6 198.5 C690.7 199.5 680.2 202.1 676.0 204.6 C671.8 207.1 670.1 209.6 668.4 213.4 C666.6 217.2 666.0 224.9 665.5 227.2"/><path d="M711.0 201.0 C712.9 201.7 715.2 202.2 722.5 205.0 C729.8 207.8 747.9 213.8 755.0 217.5 C762.1 221.2 762.2 223.9 765.0 227.5 C767.8 231.1 767.4 236.5 772.0 239.0 C776.6 241.5 787.2 241.7 792.5 242.5 C797.8 243.3 802.1 243.8 804.0 244.0"/><path d="M812.5 227.5 C815.4 227.1 825.4 222.9 830.0 225.0 C834.6 227.1 837.1 235.4 840.0 240.0 C842.9 244.6 843.8 245.0 847.5 252.5 C851.2 260.0 857.5 277.4 862.5 285.0 C867.5 292.6 869.6 291.3 877.5 298.0 C885.4 304.7 902.5 319.5 910.0 325.0 C917.5 330.5 918.8 328.1 922.5 331.0 C926.2 333.9 928.8 337.8 932.5 342.5 C936.2 347.2 942.9 356.7 945.0 359.5"/><path d="M482.0 270.5 C483.8 272.2 482.0 279.1 492.5 280.5 C503.0 281.9 535.1 278.6 545.0 279.0 C554.9 279.4 548.2 281.2 552.0 283.0 C555.8 284.8 559.5 287.0 567.5 290.0 C575.5 293.0 592.8 298.1 600.0 301.0 C607.2 303.9 609.2 306.4 611.0 307.5"/><path d="M565.0 294.0 C570.8 295.4 592.3 300.2 600.0 302.5 C607.7 304.8 609.2 306.7 611.0 307.5"/><path d="M482.0 270.5 C480.8 272.5 477.0 275.5 475.0 282.5 C473.0 289.5 472.0 305.6 470.0 312.5 C468.0 319.4 466.1 320.1 463.1 324.1 C460.1 328.2 454.6 332.5 451.8 336.8 C449.0 341.1 447.1 348.0 446.2 350.2"/><path d="M515.5 295.5 C517.9 294.4 525.1 290.6 530.0 289.0 C534.9 287.4 541.3 287.0 545.0 286.0 C548.7 285.0 550.8 283.5 552.0 283.0"/><path d="M515.5 295.5 C514.6 297.1 510.9 299.2 510.0 305.0 C509.1 310.8 509.2 322.9 510.0 330.0 C510.8 337.1 511.7 342.6 515.0 347.5 C518.3 352.4 525.0 357.4 530.0 359.5 C535.0 361.6 541.5 358.7 545.0 360.0 C548.5 361.3 550.2 363.8 551.0 367.5 C551.8 371.2 549.7 378.4 550.0 382.5 C550.3 386.6 552.3 387.8 553.0 392.0 C553.7 396.2 555.3 402.0 554.0 407.5 C552.7 413.0 549.0 420.0 545.0 425.0 C541.0 430.0 533.3 433.8 530.0 437.5 C526.7 441.2 525.4 444.2 525.0 447.5 C524.6 450.8 525.8 453.8 527.5 457.5 C529.2 461.2 533.8 466.2 535.0 470.0 C536.2 473.8 535.9 475.8 535.0 480.0 C534.1 484.2 531.6 490.4 529.5 495.0 C527.4 499.6 523.2 502.5 522.5 507.5 C521.8 512.5 522.9 519.6 525.0 525.0 C527.1 530.4 533.3 537.5 535.0 540.0"/><path d="M665.5 227.2 C664.3 229.3 660.8 236.2 658.5 239.7 C656.2 243.2 653.1 246.6 652.0 248.0"/><path d="M604.0 300.0 C604.6 297.5 606.2 289.3 607.5 285.0 C608.8 280.7 611.2 275.8 612.0 274.0"/><path d="M644.0 259.7 C642.5 262.2 638.6 268.3 635.0 275.0 C631.4 281.7 625.7 294.5 622.5 300.0 C619.3 305.5 617.1 306.7 616.0 308.0"/><path d="M614.0 317.5 L614.0 327.5"/><path d="M652.5 257.5 C659.6 257.4 684.6 256.4 695.0 257.0 C705.4 257.6 710.0 260.9 715.0 261.0 C720.0 261.1 722.1 259.3 725.0 257.5 C727.9 255.7 730.0 253.3 732.5 250.0 C735.0 246.7 736.6 240.0 740.0 237.5 C743.4 235.0 750.8 235.4 753.0 235.0"/><path d="M753.0 235.0 C750.8 236.7 744.2 240.8 740.0 245.0 C735.8 249.2 730.0 255.8 727.5 260.0 C725.0 264.2 728.8 266.0 725.0 270.0 C721.2 274.0 708.3 281.7 705.0 284.0"/><path d="M712.5 262.5 C717.1 265.8 728.8 274.6 740.0 282.5 C751.2 290.4 770.7 303.9 780.0 310.0 C789.3 316.1 790.7 315.6 796.0 319.4 C801.3 323.2 806.5 327.9 812.0 332.6 C817.5 337.3 823.7 342.9 829.0 347.6 C834.3 352.3 840.6 357.7 844.0 360.8 C847.4 363.9 848.2 365.1 849.1 366.0"/><path d="M610.4 343.4 C612.0 345.7 616.6 352.2 620.0 357.0 C623.4 361.8 631.5 368.5 631.0 372.0 C630.5 375.5 619.8 375.8 617.0 378.0 C614.2 380.2 614.5 382.0 614.0 385.0 C613.5 388.0 613.4 391.0 614.0 396.0 C614.6 401.0 616.5 406.8 617.5 415.0 C618.5 423.2 617.9 437.9 620.0 445.0 C622.1 452.1 626.2 453.5 630.0 457.5 C633.8 461.5 639.2 464.4 643.0 469.0 C646.8 473.6 650.5 480.2 652.5 485.0 C654.5 489.8 653.6 493.7 655.0 497.5 C656.4 501.3 659.8 503.8 661.0 508.0 C662.2 512.2 661.0 518.4 662.5 522.5 C664.0 526.6 668.3 529.6 670.0 532.5 C671.7 535.4 672.1 538.8 672.5 540.0"/><path d="M587.0 341.5 C585.5 340.2 582.5 335.7 578.0 334.0 C573.5 332.3 564.3 331.2 560.0 331.5 C555.7 331.8 553.2 334.1 552.0 336.0 C550.8 337.9 551.2 340.7 553.0 343.0 C554.8 345.3 560.7 347.8 563.0 350.0 C565.3 352.2 565.7 354.3 567.0 356.0 C568.3 357.7 569.2 358.8 571.0 360.0 C572.8 361.2 576.4 362.5 577.5 363.0"/><path d="M648.0 329.0 C650.0 331.2 655.3 338.7 660.0 342.5 C664.7 346.3 671.8 348.4 676.0 352.0 C680.2 355.6 681.8 361.4 685.0 364.0 C688.2 366.6 691.5 366.3 695.0 367.5 C698.5 368.7 701.8 369.3 706.0 371.0 C710.2 372.7 716.0 374.3 720.0 377.5 C724.0 380.7 725.8 385.4 730.0 390.0 C734.2 394.6 739.2 401.8 745.0 405.0 C750.8 408.2 758.3 407.0 765.0 409.5 C771.7 412.0 777.5 414.1 785.0 420.0 C792.5 425.9 802.9 437.9 810.0 445.0 C817.1 452.1 822.8 458.2 827.5 462.5 C832.2 466.8 836.2 469.6 838.0 471.0"/><path d="M650.0 338.0 C651.7 339.6 656.7 340.9 660.0 347.5 C663.3 354.1 666.2 366.2 670.0 377.5 C673.8 388.8 679.0 406.1 682.5 415.0 C686.0 423.9 687.2 424.8 691.0 431.0 C694.8 437.2 700.6 445.2 705.0 452.5 C709.4 459.8 712.5 468.3 717.5 475.0 C722.5 481.7 728.8 487.7 735.0 492.5 C741.2 497.3 750.5 501.8 755.0 504.0 C759.5 506.2 758.7 504.1 762.0 505.5 C765.3 506.9 770.5 510.5 775.0 512.5 C779.5 514.5 782.3 515.4 789.0 517.5 C795.7 519.6 808.2 521.2 815.0 525.0 C821.8 528.8 827.5 537.5 830.0 540.0"/><path d="M656.0 336.0 C658.0 338.7 664.3 343.8 668.0 352.0 C671.7 360.2 674.7 373.7 678.0 385.0 C681.3 396.3 685.2 411.5 688.0 420.0 C690.8 428.5 693.8 433.3 695.0 436.0"/><path d="M679.0 475.0 C679.6 477.5 681.5 485.4 682.5 490.0 C683.5 494.6 682.9 498.3 685.0 502.5 C687.1 506.7 691.5 512.1 695.0 515.0 C698.5 517.9 701.8 517.5 706.0 520.0 C710.2 522.5 714.8 526.7 720.0 530.0 C725.2 533.3 734.6 538.3 737.5 540.0"/><path d="M677.5 477.5 C677.9 481.2 677.9 493.4 680.0 500.0 C682.1 506.6 688.3 514.2 690.0 517.0"/><path d="M706.0 520.0 C704.2 522.5 698.1 531.7 695.0 535.0 C691.9 538.3 688.8 539.2 687.5 540.0"/><path d="M849.1 366.0 C850.1 366.7 850.6 368.3 855.3 370.2 C860.0 372.1 869.6 374.2 877.5 377.5 C885.4 380.8 896.2 386.2 902.5 390.0 C908.8 393.8 911.3 396.8 915.0 400.0 C918.7 403.2 921.2 405.5 924.5 409.0 C927.8 412.5 931.1 415.8 934.5 421.0 C937.9 426.2 942.8 435.2 945.0 440.0 C947.2 444.8 947.5 448.3 948.0 450.0"/><path d="M935.0 407.5 L948.0 402.5"/><path d="M927.5 340.0 C929.6 342.5 936.6 350.8 940.0 355.0 C943.4 359.2 946.7 363.3 948.0 365.0"/></g>
<g fill="none" stroke="#5a5a5a" stroke-width="2.1" stroke-dasharray="4 2.6"><path d="M335.0 230.0 C340.8 228.5 358.0 223.4 370.0 221.0 C382.0 218.6 400.8 216.4 407.0 215.5"/><path d="M22.5 317.5 L16.0 332.5"/><path d="M665.0 192.0 C667.5 192.7 675.3 195.1 680.0 196.0 C684.7 196.9 690.8 197.2 693.0 197.5"/><path d="M607.5 285.0 C609.6 283.7 615.4 279.1 620.0 277.0 C624.6 274.9 632.5 273.2 635.0 272.5"/><path d="M632.5 277.5 C634.6 279.9 640.8 287.0 645.0 292.0 C649.2 297.0 655.0 304.9 657.5 307.5 C660.0 310.1 659.6 307.5 660.0 307.5"/><path d="M613.0 355.0 C613.8 358.3 616.0 368.3 618.0 375.0 C620.0 381.7 622.6 388.8 625.0 395.0 C627.4 401.2 630.4 406.2 632.5 412.0 C634.6 417.8 635.4 424.9 637.5 430.0 C639.6 435.1 641.8 440.7 645.0 442.5 C648.2 444.3 655.0 441.2 657.0 441.0"/><path d="M655.0 337.5 C658.3 335.8 669.2 332.1 675.0 327.5 C680.8 322.9 687.5 312.9 690.0 310.0"/></g>
<path d="M587 341.5 L600 342" fill="none" stroke="#777" stroke-width="5.2" stroke-linecap="round"/><path d="M587 341.5 L600 342" fill="none" stroke="#b5b5b5" stroke-width="3.4" stroke-linecap="round"/>
<circle cx="287" cy="71" r="3.1" fill="#5c5c5c" stroke="#fff" stroke-width="1.6" stroke-opacity="0.9"/>
<circle cx="365" cy="147.5" r="3.6" fill="#fff" stroke="#666" stroke-width="1.3"/>
<circle cx="375.5" cy="176" r="3.1" fill="#5c5c5c" stroke="#fff" stroke-width="1.6" stroke-opacity="0.9"/>
<circle cx="440" cy="89" r="3.1" fill="#5c5c5c" stroke="#fff" stroke-width="1.6" stroke-opacity="0.9"/>
<circle cx="604" cy="158" r="3.1" fill="#5c5c5c" stroke="#fff" stroke-width="1.6" stroke-opacity="0.9"/>
<circle cx="694" cy="70.5" r="3.1" fill="#5c5c5c" stroke="#fff" stroke-width="1.6" stroke-opacity="0.9"/>
<circle cx="665" cy="192" r="3.6" fill="#fff" stroke="#666" stroke-width="1.3"/>
<circle cx="242.5" cy="291" r="3.1" fill="#5c5c5c" stroke="#fff" stroke-width="1.6" stroke-opacity="0.9"/>
<circle cx="321" cy="370" r="3.1" fill="#5c5c5c" stroke="#fff" stroke-width="1.6" stroke-opacity="0.9"/>
<circle cx="412" cy="365" r="3.1" fill="#5c5c5c" stroke="#fff" stroke-width="1.6" stroke-opacity="0.9"/>
<circle cx="101" cy="330" r="3.1" fill="#5c5c5c" stroke="#fff" stroke-width="1.6" stroke-opacity="0.9"/>
<circle cx="189.5" cy="374" r="3.1" fill="#5c5c5c" stroke="#fff" stroke-width="1.6" stroke-opacity="0.9"/>
<circle cx="62" cy="442" r="3.1" fill="#5c5c5c" stroke="#fff" stroke-width="1.6" stroke-opacity="0.9"/>
<circle cx="404" cy="494" r="3.1" fill="#5c5c5c" stroke="#fff" stroke-width="1.6" stroke-opacity="0.9"/>
<circle cx="529.5" cy="495" r="3.1" fill="#5c5c5c" stroke="#fff" stroke-width="1.6" stroke-opacity="0.9"/>
<circle cx="577.5" cy="363" r="3.1" fill="#5c5c5c" stroke="#fff" stroke-width="1.6" stroke-opacity="0.9"/>
<circle cx="661" cy="508" r="3.1" fill="#5c5c5c" stroke="#fff" stroke-width="1.6" stroke-opacity="0.9"/>
<circle cx="762" cy="505.5" r="3.1" fill="#5c5c5c" stroke="#fff" stroke-width="1.6" stroke-opacity="0.9"/>
<circle cx="838" cy="472" r="3.1" fill="#5c5c5c" stroke="#fff" stroke-width="1.6" stroke-opacity="0.9"/>
<circle cx="849" cy="366" r="3.1" fill="#5c5c5c" stroke="#fff" stroke-width="1.6" stroke-opacity="0.9"/>
<circle cx="587" cy="341.5" r="3.8" fill="#b0b0b0" stroke="#777" stroke-width="1"/>
<g transform="translate(653 174)" fill="#111"><path d="M-8.5 -1.1 L6 -1.1 Q8.5 -1.1 8.5 0 Q8.5 1.1 6 1.1 L-8.5 1.1 Z"/><path d="M2.2 -1 L-1.8 -7.8 L-3.6 -7.8 L-1.6 -1 Z"/><path d="M2.2 1 L-1.8 7.8 L-3.6 7.8 L-1.6 1 Z"/><path d="M-6 -1 L-8 -4.2 L-9.2 -4.2 L-8.2 -1 Z"/><path d="M-6 1 L-8 4.2 L-9.2 4.2 L-8.2 1 Z"/></g>
<text x="348" y="82.9" font-size="10.70" font-weight="normal" fill="#fff" stroke="#fff" stroke-opacity="0.6" stroke-width="2.2" letter-spacing="0.6" textLength="88" lengthAdjust="spacingAndGlyphs">Niederweningen</text>
<text x="348" y="82.9" font-size="10.70" font-weight="normal" fill="#333" stroke="#333" stroke-width="0.3" letter-spacing="0.6" textLength="88" lengthAdjust="spacingAndGlyphs">Niederweningen</text>
<text x="584" y="66.4" font-size="10.70" font-weight="normal" fill="#fff" stroke="#fff" stroke-opacity="0.6" stroke-width="2.2" letter-spacing="0.6" textLength="52" lengthAdjust="spacingAndGlyphs">Bülach</text>
<text x="584" y="66.4" font-size="10.70" font-weight="normal" fill="#333" stroke="#333" stroke-width="0.3" letter-spacing="0.6" textLength="52" lengthAdjust="spacingAndGlyphs">Bülach</text>
<text x="306" y="114.9" font-size="10.70" font-weight="normal" fill="#fff" stroke="#fff" stroke-opacity="0.6" stroke-width="2.2" letter-spacing="0.6" textLength="28" lengthAdjust="spacingAndGlyphs">Turgi</text>
<text x="306" y="114.9" font-size="10.70" font-weight="normal" fill="#333" stroke="#333" stroke-width="0.3" letter-spacing="0.6" textLength="28" lengthAdjust="spacingAndGlyphs">Turgi</text>
<text x="369.5" y="140.2" font-size="11.77" font-weight="bold" fill="#fff" stroke="#fff" stroke-opacity="0.6" stroke-width="2.2" letter-spacing="0.5" textLength="40.0" lengthAdjust="spacingAndGlyphs">Baden</text>
<text x="369.5" y="140.2" font-size="11.77" font-weight="bold" fill="#111" stroke="#111" stroke-width="0.3" letter-spacing="0.5" textLength="40.0" lengthAdjust="spacingAndGlyphs">Baden</text>
<text x="255.5" y="155.2" font-size="11.77" font-weight="bold" fill="#fff" stroke="#fff" stroke-opacity="0.6" stroke-width="2.2" letter-spacing="0.5" textLength="62.0" lengthAdjust="spacingAndGlyphs">Brugg AG</text>
<text x="255.5" y="155.2" font-size="11.77" font-weight="bold" fill="#111" stroke="#111" stroke-width="0.3" letter-spacing="0.5" textLength="62.0" lengthAdjust="spacingAndGlyphs">Brugg AG</text>
<text x="379" y="169.9" font-size="10.70" font-weight="normal" fill="#fff" stroke="#fff" stroke-opacity="0.6" stroke-width="2.2" letter-spacing="0.6" textLength="55.5" lengthAdjust="spacingAndGlyphs">Wettingen</text>
<text x="379" y="169.9" font-size="10.70" font-weight="normal" fill="#333" stroke="#333" stroke-width="0.3" letter-spacing="0.6" textLength="55.5" lengthAdjust="spacingAndGlyphs">Wettingen</text>
<text x="318" y="217.9" font-size="10.70" font-weight="normal" fill="#fff" stroke="#fff" stroke-opacity="0.6" stroke-width="2.2" letter-spacing="0.6" textLength="54" lengthAdjust="spacingAndGlyphs">Fislisbach</text>
<text x="318" y="217.9" font-size="10.70" font-weight="normal" fill="#888" stroke="#888" stroke-width="0.3" letter-spacing="0.6" textLength="54" lengthAdjust="spacingAndGlyphs">Fislisbach</text>
<text x="527.5" y="171.9" font-size="10.70" font-weight="normal" fill="#fff" stroke="#fff" stroke-opacity="0.6" stroke-width="2.2" letter-spacing="0.6" textLength="72.0" lengthAdjust="spacingAndGlyphs">Oberglatt ZH</text>
<text x="527.5" y="171.9" font-size="10.70" font-weight="normal" fill="#333" stroke="#333" stroke-width="0.3" letter-spacing="0.6" textLength="72.0" lengthAdjust="spacingAndGlyphs">Oberglatt ZH</text>
<text x="777.5" y="108.7" font-size="11.77" font-weight="bold" fill="#fff" stroke="#fff" stroke-opacity="0.6" stroke-width="2.2" letter-spacing="0.5" textLength="71.5" lengthAdjust="spacingAndGlyphs">Winterthur</text>
<text x="777.5" y="108.7" font-size="11.77" font-weight="bold" fill="#111" stroke="#111" stroke-width="0.3" letter-spacing="0.5" textLength="71.5" lengthAdjust="spacingAndGlyphs">Winterthur</text>
<text x="920.5" y="74.9" font-size="10.70" font-weight="normal" fill="#fff" stroke="#fff" stroke-opacity="0.6" stroke-width="2.2" letter-spacing="0.6" textLength="79.5" lengthAdjust="spacingAndGlyphs">Wiesendangen</text>
<text x="920.5" y="74.9" font-size="10.70" font-weight="normal" fill="#333" stroke="#333" stroke-width="0.3" letter-spacing="0.6" textLength="79.5" lengthAdjust="spacingAndGlyphs">Wiesendangen</text>
<text x="778" y="155.9" font-size="10.70" font-weight="normal" fill="#fff" stroke="#fff" stroke-opacity="0.6" stroke-width="2.2" letter-spacing="0.6" textLength="39.5" lengthAdjust="spacingAndGlyphs">Brütten</text>
<text x="778" y="155.9" font-size="10.70" font-weight="normal" fill="#888" stroke="#888" stroke-width="0.3" letter-spacing="0.6" textLength="39.5" lengthAdjust="spacingAndGlyphs">Brütten</text>
<text x="669" y="172.2" font-size="11.77" font-weight="bold" fill="#fff" stroke="#fff" stroke-opacity="0.6" stroke-width="2.2" letter-spacing="0.5" textLength="42" lengthAdjust="spacingAndGlyphs">Zürich</text>
<text x="669" y="172.2" font-size="11.77" font-weight="bold" fill="#111" stroke="#111" stroke-width="0.3" letter-spacing="0.5" textLength="42" lengthAdjust="spacingAndGlyphs">Zürich</text>
<text x="669" y="185.2" font-size="11.77" font-weight="bold" fill="#fff" stroke="#fff" stroke-opacity="0.6" stroke-width="2.2" letter-spacing="0.5" textLength="65.5" lengthAdjust="spacingAndGlyphs">Flughafen</text>
<text x="669" y="185.2" font-size="11.77" font-weight="bold" fill="#111" stroke="#111" stroke-width="0.3" letter-spacing="0.5" textLength="65.5" lengthAdjust="spacingAndGlyphs">Flughafen</text>
<text x="465" y="226.4" font-size="10.70" font-weight="normal" fill="#fff" stroke="#fff" stroke-opacity="0.6" stroke-width="2.2" letter-spacing="0.6" textLength="41" lengthAdjust="spacingAndGlyphs">Limmat</text>
<text x="465" y="226.4" font-size="10.70" font-weight="normal" fill="#4a7aa8" stroke="#4a7aa8" stroke-width="0.3" letter-spacing="0.6" textLength="41" lengthAdjust="spacingAndGlyphs">Limmat</text>
<text x="432" y="274.5" font-size="11.24" font-weight="normal" fill="#fff" stroke="#fff" stroke-opacity="0.6" stroke-width="2.2" letter-spacing="0.6" textLength="45" lengthAdjust="spacingAndGlyphs">Dietikon</text>
<text x="432" y="274.5" font-size="11.24" font-weight="normal" fill="#333" stroke="#333" stroke-width="0.3" letter-spacing="0.6" textLength="45" lengthAdjust="spacingAndGlyphs">Dietikon</text>
<text x="658" y="226.9" font-size="10.70" font-weight="normal" fill="#fff" stroke="#fff" stroke-opacity="0.6" stroke-width="2.2" letter-spacing="0.6" textLength="47" lengthAdjust="spacingAndGlyphs">Opfikon</text>
<text x="658" y="226.9" font-size="10.70" font-weight="normal" fill="#888" stroke="#888" stroke-width="0.3" letter-spacing="0.6" textLength="47" lengthAdjust="spacingAndGlyphs">Opfikon</text>
<text x="816" y="249.5" font-size="11.24" font-weight="normal" fill="#fff" stroke="#fff" stroke-opacity="0.6" stroke-width="2.2" letter-spacing="0.6" textLength="53.5" lengthAdjust="spacingAndGlyphs">Effretikon</text>
<text x="816" y="249.5" font-size="11.24" font-weight="normal" fill="#333" stroke="#333" stroke-width="0.3" letter-spacing="0.6" textLength="53.5" lengthAdjust="spacingAndGlyphs">Effretikon</text>
<text x="649.5" y="275.2" font-size="11.56" font-weight="bold" fill="#fff" stroke="#fff" stroke-opacity="0.6" stroke-width="2.2" letter-spacing="0.5" textLength="41.5" lengthAdjust="spacingAndGlyphs">Zürich</text>
<text x="649.5" y="275.2" font-size="11.56" font-weight="bold" fill="#111" stroke="#111" stroke-width="0.3" letter-spacing="0.5" textLength="41.5" lengthAdjust="spacingAndGlyphs">Zürich</text>
<text x="649.5" y="287.7" font-size="11.56" font-weight="bold" fill="#fff" stroke="#fff" stroke-opacity="0.6" stroke-width="2.2" letter-spacing="0.5" textLength="55.5" lengthAdjust="spacingAndGlyphs">Oerlikon</text>
<text x="649.5" y="287.7" font-size="11.56" font-weight="bold" fill="#111" stroke="#111" stroke-width="0.3" letter-spacing="0.5" textLength="55.5" lengthAdjust="spacingAndGlyphs">Oerlikon</text>
<text x="650" y="320.9" font-size="15.09" font-weight="bold" fill="#fff" stroke="#fff" stroke-opacity="0.6" stroke-width="2.2" letter-spacing="0.5" textLength="84.5" lengthAdjust="spacingAndGlyphs">Zürich HB</text>
<text x="650" y="320.9" font-size="15.09" font-weight="bold" fill="#111" stroke="#111" stroke-width="0.3" letter-spacing="0.5" textLength="84.5" lengthAdjust="spacingAndGlyphs">Zürich HB</text>
<text x="789" y="300.9" font-size="10.70" font-weight="normal" fill="#fff" stroke="#fff" stroke-opacity="0.6" stroke-width="2.2" letter-spacing="0.6" textLength="54" lengthAdjust="spacingAndGlyphs">Volketswil</text>
<text x="789" y="300.9" font-size="10.70" font-weight="normal" fill="#888" stroke="#888" stroke-width="0.3" letter-spacing="0.6" textLength="54" lengthAdjust="spacingAndGlyphs">Volketswil</text>
<text x="852.5" y="359.5" font-size="11.24" font-weight="normal" fill="#fff" stroke="#fff" stroke-opacity="0.6" stroke-width="2.2" letter-spacing="0.6" textLength="29.5" lengthAdjust="spacingAndGlyphs">Uster</text>
<text x="852.5" y="359.5" font-size="11.24" font-weight="normal" fill="#333" stroke="#333" stroke-width="0.3" letter-spacing="0.6" textLength="29.5" lengthAdjust="spacingAndGlyphs">Uster</text>
<text x="207" y="288.2" font-size="11.77" font-weight="bold" fill="#fff" stroke="#fff" stroke-opacity="0.6" stroke-width="2.2" letter-spacing="0.5" textLength="62" lengthAdjust="spacingAndGlyphs">Lenzburg</text>
<text x="207" y="288.2" font-size="11.77" font-weight="bold" fill="#111" stroke="#111" stroke-width="0.3" letter-spacing="0.5" textLength="62" lengthAdjust="spacingAndGlyphs">Lenzburg</text>
<text x="345.5" y="265.9" font-size="10.70" font-weight="normal" fill="#fff" stroke="#fff" stroke-opacity="0.6" stroke-width="2.2" letter-spacing="0.6" textLength="33.5" lengthAdjust="spacingAndGlyphs">Reuss</text>
<text x="345.5" y="265.9" font-size="10.70" font-weight="normal" fill="#4a7aa8" stroke="#4a7aa8" stroke-width="0.3" letter-spacing="0.6" textLength="33.5" lengthAdjust="spacingAndGlyphs">Reuss</text>
<text x="326" y="323.4" font-size="10.70" font-weight="normal" fill="#fff" stroke="#fff" stroke-opacity="0.6" stroke-width="2.2" letter-spacing="0.6" textLength="50" lengthAdjust="spacingAndGlyphs">Niederwil</text>
<text x="326" y="323.4" font-size="10.70" font-weight="normal" fill="#888" stroke="#888" stroke-width="0.3" letter-spacing="0.6" textLength="50" lengthAdjust="spacingAndGlyphs">Niederwil</text>
<text x="107" y="333.0" font-size="11.24" font-weight="normal" fill="#fff" stroke="#fff" stroke-opacity="0.6" stroke-width="2.2" letter-spacing="0.6" textLength="25" lengthAdjust="spacingAndGlyphs">Suhr</text>
<text x="107" y="333.0" font-size="11.24" font-weight="normal" fill="#333" stroke="#333" stroke-width="0.3" letter-spacing="0.6" textLength="25" lengthAdjust="spacingAndGlyphs">Suhr</text>
<text x="195" y="376.5" font-size="11.24" font-weight="normal" fill="#fff" stroke="#fff" stroke-opacity="0.6" stroke-width="2.2" letter-spacing="0.6" textLength="27" lengthAdjust="spacingAndGlyphs">Seon</text>
<text x="195" y="376.5" font-size="11.24" font-weight="normal" fill="#333" stroke="#333" stroke-width="0.3" letter-spacing="0.6" textLength="27" lengthAdjust="spacingAndGlyphs">Seon</text>
<text x="7" y="394.9" font-size="10.70" font-weight="normal" fill="#fff" stroke="#fff" stroke-opacity="0.6" stroke-width="2.2" letter-spacing="0.6" textLength="46" lengthAdjust="spacingAndGlyphs">Kölliken</text>
<text x="7" y="394.9" font-size="10.70" font-weight="normal" fill="#888" stroke="#888" stroke-width="0.3" letter-spacing="0.6" textLength="46" lengthAdjust="spacingAndGlyphs">Kölliken</text>
<text x="256" y="383.0" font-size="11.24" font-weight="normal" fill="#fff" stroke="#fff" stroke-opacity="0.6" stroke-width="2.2" letter-spacing="0.6" textLength="61" lengthAdjust="spacingAndGlyphs">Wohlen AG</text>
<text x="256" y="383.0" font-size="11.24" font-weight="normal" fill="#333" stroke="#333" stroke-width="0.3" letter-spacing="0.6" textLength="61" lengthAdjust="spacingAndGlyphs">Wohlen AG</text>
<text x="416" y="379.0" font-size="11.24" font-weight="normal" fill="#fff" stroke="#fff" stroke-opacity="0.6" stroke-width="2.2" letter-spacing="0.6" textLength="64.5" lengthAdjust="spacingAndGlyphs">Bremgarten</text>
<text x="416" y="379.0" font-size="11.24" font-weight="normal" fill="#333" stroke="#333" stroke-width="0.3" letter-spacing="0.6" textLength="64.5" lengthAdjust="spacingAndGlyphs">Bremgarten</text>
<text x="553" y="376.0" font-size="11.24" font-weight="normal" fill="#fff" stroke="#fff" stroke-opacity="0.6" stroke-width="2.2" letter-spacing="0.6" textLength="51" lengthAdjust="spacingAndGlyphs">Uetliberg</text>
<text x="553" y="376.0" font-size="11.24" font-weight="normal" fill="#333" stroke="#333" stroke-width="0.3" letter-spacing="0.6" textLength="51" lengthAdjust="spacingAndGlyphs">Uetliberg</text>
<text x="539" y="400.6" font-size="10.70" font-weight="normal" fill="#fff" stroke="#fff" stroke-opacity="0.6" stroke-width="2.2" letter-spacing="0.6" textLength="75" lengthAdjust="spacingAndGlyphs">Zimmerberg</text>
<text x="539" y="400.6" font-size="10.70" font-weight="normal" fill="#555" stroke="#555" stroke-width="0.3" letter-spacing="0.6" textLength="75" lengthAdjust="spacingAndGlyphs">Zimmerberg</text>
<text x="547" y="411.9" font-size="10.70" font-weight="normal" fill="#fff" stroke="#fff" stroke-opacity="0.6" stroke-width="2.2" letter-spacing="0.6" textLength="70" lengthAdjust="spacingAndGlyphs">basistunnel</text>
<text x="547" y="411.9" font-size="10.70" font-weight="normal" fill="#555" stroke="#555" stroke-width="0.3" letter-spacing="0.6" textLength="70" lengthAdjust="spacingAndGlyphs">basistunnel</text>
<text x="112" y="438.4" font-size="10.70" font-weight="normal" fill="#fff" stroke="#fff" stroke-opacity="0.6" stroke-width="2.2" letter-spacing="0.6" textLength="54" lengthAdjust="spacingAndGlyphs">Unterkulm</text>
<text x="112" y="438.4" font-size="10.70" font-weight="normal" fill="#888" stroke="#888" stroke-width="0.3" letter-spacing="0.6" textLength="54" lengthAdjust="spacingAndGlyphs">Unterkulm</text>
<text x="32" y="455.0" font-size="11.24" font-weight="normal" fill="#fff" stroke="#fff" stroke-opacity="0.6" stroke-width="2.2" letter-spacing="0.6" textLength="59" lengthAdjust="spacingAndGlyphs">Schöftland</text>
<text x="32" y="455.0" font-size="11.24" font-weight="normal" fill="#333" stroke="#333" stroke-width="0.3" letter-spacing="0.6" textLength="59" lengthAdjust="spacingAndGlyphs">Schöftland</text>
<text x="356" y="455.9" font-size="10.70" font-weight="normal" fill="#fff" stroke="#fff" stroke-opacity="0.6" stroke-width="2.2" letter-spacing="0.6" textLength="35" lengthAdjust="spacingAndGlyphs">Boswil</text>
<text x="356" y="455.9" font-size="10.70" font-weight="normal" fill="#888" stroke="#888" stroke-width="0.3" letter-spacing="0.6" textLength="35" lengthAdjust="spacingAndGlyphs">Boswil</text>
<text x="221" y="477.9" font-size="10.70" font-weight="normal" fill="#d2d2d2" stroke="#d2d2d2" stroke-width="0.3" letter-spacing="0.6" textLength="68" lengthAdjust="spacingAndGlyphs">Hallwilersee</text>
<text x="639" y="416.9" font-size="10.70" font-weight="normal" fill="#cfdde6" stroke="#cfdde6" stroke-width="0.3" letter-spacing="0.6" textLength="53.5" lengthAdjust="spacingAndGlyphs">Zürichsee</text>
<text x="770" y="366.9" font-size="10.70" font-weight="normal" fill="#d9dcdd" stroke="#d9dcdd" stroke-width="0.3" letter-spacing="0.6" textLength="60" lengthAdjust="spacingAndGlyphs">Greifensee</text>
<text x="861" y="436.5" font-size="11.24" font-weight="normal" fill="#fff" stroke="#fff" stroke-opacity="0.6" stroke-width="2.2" letter-spacing="0.6" textLength="69.5" lengthAdjust="spacingAndGlyphs">Wetzikon ZH</text>
<text x="861" y="436.5" font-size="11.24" font-weight="normal" fill="#333" stroke="#333" stroke-width="0.3" letter-spacing="0.6" textLength="69.5" lengthAdjust="spacingAndGlyphs">Wetzikon ZH</text>
<text x="675.5" y="476.2" font-size="11.77" font-weight="bold" fill="#fff" stroke="#fff" stroke-opacity="0.6" stroke-width="2.2" letter-spacing="0.5" textLength="44.5" lengthAdjust="spacingAndGlyphs">Thalwil</text>
<text x="675.5" y="476.2" font-size="11.77" font-weight="bold" fill="#111" stroke="#111" stroke-width="0.3" letter-spacing="0.5" textLength="44.5" lengthAdjust="spacingAndGlyphs">Thalwil</text>
<text x="843" y="485.0" font-size="11.24" font-weight="normal" fill="#fff" stroke="#fff" stroke-opacity="0.6" stroke-width="2.2" letter-spacing="0.6" textLength="53" lengthAdjust="spacingAndGlyphs">Esslingen</text>
<text x="843" y="485.0" font-size="11.24" font-weight="normal" fill="#333" stroke="#333" stroke-width="0.3" letter-spacing="0.6" textLength="53" lengthAdjust="spacingAndGlyphs">Esslingen</text>
<text x="478" y="478.5" font-size="11.24" font-weight="normal" fill="#fff" stroke="#fff" stroke-opacity="0.6" stroke-width="2.2" letter-spacing="0.6" textLength="48" lengthAdjust="spacingAndGlyphs">Affoltern</text>
<text x="478" y="478.5" font-size="11.24" font-weight="normal" fill="#333" stroke="#333" stroke-width="0.3" letter-spacing="0.6" textLength="48" lengthAdjust="spacingAndGlyphs">Affoltern</text>
<text x="478" y="488.5" font-size="11.24" font-weight="normal" fill="#fff" stroke="#fff" stroke-opacity="0.6" stroke-width="2.2" letter-spacing="0.6" textLength="48" lengthAdjust="spacingAndGlyphs">am Albis</text>
<text x="478" y="488.5" font-size="11.24" font-weight="normal" fill="#333" stroke="#333" stroke-width="0.3" letter-spacing="0.6" textLength="48" lengthAdjust="spacingAndGlyphs">am Albis</text>
<text x="197" y="508.0" font-size="11.24" font-weight="normal" fill="#fff" stroke="#fff" stroke-opacity="0.6" stroke-width="2.2" letter-spacing="0.6" textLength="40" lengthAdjust="spacingAndGlyphs">Beinwil</text>
<text x="197" y="508.0" font-size="11.24" font-weight="normal" fill="#333" stroke="#333" stroke-width="0.3" letter-spacing="0.6" textLength="40" lengthAdjust="spacingAndGlyphs">Beinwil</text>
<text x="197" y="519.0" font-size="11.24" font-weight="normal" fill="#fff" stroke="#fff" stroke-opacity="0.6" stroke-width="2.2" letter-spacing="0.6" textLength="40" lengthAdjust="spacingAndGlyphs">am See</text>
<text x="197" y="519.0" font-size="11.24" font-weight="normal" fill="#333" stroke="#333" stroke-width="0.3" letter-spacing="0.6" textLength="40" lengthAdjust="spacingAndGlyphs">am See</text>
<text x="356" y="508.0" font-size="11.24" font-weight="normal" fill="#fff" stroke="#fff" stroke-opacity="0.6" stroke-width="2.2" letter-spacing="0.6" textLength="44.5" lengthAdjust="spacingAndGlyphs">Muri AG</text>
<text x="356" y="508.0" font-size="11.24" font-weight="normal" fill="#333" stroke="#333" stroke-width="0.3" letter-spacing="0.6" textLength="44.5" lengthAdjust="spacingAndGlyphs">Muri AG</text>
<text x="766" y="499.5" font-size="11.24" font-weight="normal" fill="#fff" stroke="#fff" stroke-opacity="0.6" stroke-width="2.2" letter-spacing="0.6" textLength="35" lengthAdjust="spacingAndGlyphs">Meilen</text>
<text x="766" y="499.5" font-size="11.24" font-weight="normal" fill="#333" stroke="#333" stroke-width="0.3" letter-spacing="0.6" textLength="35" lengthAdjust="spacingAndGlyphs">Meilen</text>
<text x="609.5" y="522.0" font-size="11.24" font-weight="normal" fill="#fff" stroke="#fff" stroke-opacity="0.6" stroke-width="2.2" letter-spacing="0.6" textLength="46.5" lengthAdjust="spacingAndGlyphs">Sihlwald</text>
<text x="609.5" y="522.0" font-size="11.24" font-weight="normal" fill="#333" stroke="#333" stroke-width="0.3" letter-spacing="0.6" textLength="46.5" lengthAdjust="spacingAndGlyphs">Sihlwald</text>
<text x="687.5" y="524.4" font-size="10.70" font-weight="normal" fill="#fff" stroke="#fff" stroke-opacity="0.6" stroke-width="2.2" letter-spacing="0.6" textLength="38.5" lengthAdjust="spacingAndGlyphs">Horgen</text>
<text x="687.5" y="524.4" font-size="10.70" font-weight="normal" fill="#888" stroke="#888" stroke-width="0.3" letter-spacing="0.6" textLength="38.5" lengthAdjust="spacingAndGlyphs">Horgen</text>
<text x="790" y="537.9" font-size="10.70" font-weight="normal" fill="#fff" stroke="#fff" stroke-opacity="0.6" stroke-width="2.2" letter-spacing="0.6" textLength="56" lengthAdjust="spacingAndGlyphs">Männedorf</text>
<text x="790" y="537.9" font-size="10.70" font-weight="normal" fill="#888" stroke="#888" stroke-width="0.3" letter-spacing="0.6" textLength="56" lengthAdjust="spacingAndGlyphs">Männedorf</text>
<g transform="translate(0.7 0.9)">
<circle cx="866" cy="57" r="11.0" fill="#3cc43c" opacity="0.85"/>
<circle cx="866" cy="57" r="9.4" fill="#0ea30e" stroke="#0a300a" stroke-width="1.7"/>
<text x="859.2" y="60.1" font-size="8.6" font-weight="bold" fill="#071a07" textLength="13.5" lengthAdjust="spacingAndGlyphs">S12</text>
<circle cx="250" cy="140" r="11.5" fill="#3cc43c" opacity="0.85"/>
<circle cx="250" cy="140" r="9.9" fill="#0ea30e" stroke="#0a300a" stroke-width="1.7"/>
<text x="244.5" y="143.3" font-size="9.2" font-weight="bold" fill="#071a07" textLength="11.0" lengthAdjust="spacingAndGlyphs">RE</text>
<circle cx="301" cy="120" r="11.0" fill="#3cc43c" opacity="0.85"/>
<circle cx="301" cy="120" r="9.4" fill="#0ea30e" stroke="#0a300a" stroke-width="1.7"/>
<text x="294.2" y="123.1" font-size="8.6" font-weight="bold" fill="#071a07" textLength="13.5" lengthAdjust="spacingAndGlyphs">S27</text>
<circle cx="327.5" cy="136" r="11.0" fill="#3cc43c" opacity="0.85"/>
<circle cx="327.5" cy="136" r="9.4" fill="#0ea30e" stroke="#0a300a" stroke-width="1.7"/>
<text x="320.8" y="139.1" font-size="8.6" font-weight="bold" fill="#071a07" textLength="13.5" lengthAdjust="spacingAndGlyphs">S27</text>
<circle cx="425" cy="200" r="11.0" fill="#ffd21a" opacity="0.85"/>
<circle cx="425" cy="200" r="9.4" fill="#f6c400" stroke="#4a3a00" stroke-width="1.7"/>
<text x="419.5" y="203.3" font-size="9.2" font-weight="bold" fill="#1a1400" textLength="11.0" lengthAdjust="spacingAndGlyphs">S6</text>
<circle cx="617.5" cy="85" r="11.0" fill="#3cc43c" opacity="0.85"/>
<circle cx="617.5" cy="85" r="9.4" fill="#0ea30e" stroke="#0a300a" stroke-width="1.7"/>
<text x="612.0" y="88.3" font-size="9.2" font-weight="bold" fill="#071a07" textLength="11.0" lengthAdjust="spacingAndGlyphs">S9</text>
<circle cx="611" cy="91" r="11.0" fill="#3cc43c" opacity="0.85"/>
<circle cx="611" cy="91" r="9.4" fill="#0ea30e" stroke="#0a300a" stroke-width="1.7"/>
<text x="605.5" y="94.3" font-size="9.2" font-weight="bold" fill="#071a07" textLength="11.0" lengthAdjust="spacingAndGlyphs">S9</text>
<circle cx="855" cy="106" r="11.5" fill="#3cc43c" opacity="0.85"/>
<circle cx="855" cy="106" r="9.9" fill="#0ea30e" stroke="#0a300a" stroke-width="1.7"/>
<text x="848.0" y="108.6" font-size="7.2" font-weight="bold" fill="#071a07" textLength="14.0" lengthAdjust="spacingAndGlyphs">IR75</text>
<circle cx="876" cy="102.7" r="11.5" fill="#3cc43c" opacity="0.85"/>
<circle cx="876" cy="102.7" r="9.9" fill="#0ea30e" stroke="#0a300a" stroke-width="1.7"/>
<text x="869.2" y="105.8" font-size="8.6" font-weight="bold" fill="#071a07" textLength="13.5" lengthAdjust="spacingAndGlyphs">IC5</text>
<circle cx="905.5" cy="128" r="11.0" fill="#3cc43c" opacity="0.85"/>
<circle cx="905.5" cy="128" r="9.4" fill="#0ea30e" stroke="#0a300a" stroke-width="1.7"/>
<text x="898.8" y="131.1" font-size="8.6" font-weight="bold" fill="#071a07" textLength="13.5" lengthAdjust="spacingAndGlyphs">S11</text>
<circle cx="939" cy="202" r="11.0" fill="#3cc43c" opacity="0.85"/>
<circle cx="939" cy="202" r="9.4" fill="#0ea30e" stroke="#0a300a" stroke-width="1.7"/>
<text x="932.2" y="205.1" font-size="8.6" font-weight="bold" fill="#071a07" textLength="13.5" lengthAdjust="spacingAndGlyphs">S26</text>
<circle cx="693" cy="197.5" r="11.0" fill="#3cc43c" opacity="0.85"/>
<circle cx="693" cy="197.5" r="9.4" fill="#0ea30e" stroke="#0a300a" stroke-width="1.7"/>
<text x="686.2" y="200.6" font-size="8.6" font-weight="bold" fill="#071a07" textLength="13.5" lengthAdjust="spacingAndGlyphs">S24</text>
<circle cx="711" cy="201" r="11.0" fill="#3cc43c" opacity="0.85"/>
<circle cx="711" cy="201" r="9.4" fill="#0ea30e" stroke="#0a300a" stroke-width="1.7"/>
<text x="704.2" y="204.1" font-size="8.6" font-weight="bold" fill="#071a07" textLength="13.5" lengthAdjust="spacingAndGlyphs">S24</text>
<circle cx="665" cy="228" r="11.5" fill="#3cc43c" opacity="0.85"/>
<circle cx="665" cy="228" r="9.9" fill="#0ea30e" stroke="#0a300a" stroke-width="1.7"/>
<text x="659.5" y="231.3" font-size="9.2" font-weight="bold" fill="#071a07" textLength="11.0" lengthAdjust="spacingAndGlyphs">S7</text>
<circle cx="653.6" cy="248" r="11.0" fill="#3cc43c" opacity="0.85"/>
<circle cx="653.6" cy="248" r="9.4" fill="#0ea30e" stroke="#0a300a" stroke-width="1.7"/>
<text x="646.6" y="250.6" font-size="7.2" font-weight="bold" fill="#071a07" textLength="14.0" lengthAdjust="spacingAndGlyphs">IR36</text>
<circle cx="644" cy="259.7" r="11.5" fill="#3cc43c" opacity="0.85"/>
<circle cx="644" cy="259.7" r="9.9" fill="#0ea30e" stroke="#0a300a" stroke-width="1.7"/>
<text x="637.2" y="262.8" font-size="8.6" font-weight="bold" fill="#071a07" textLength="13.5" lengthAdjust="spacingAndGlyphs">S15</text>
<circle cx="753" cy="235" r="11.0" fill="#3cc43c" opacity="0.85"/>
<circle cx="753" cy="235" r="9.4" fill="#0ea30e" stroke="#0a300a" stroke-width="1.7"/>
<text x="746.2" y="238.1" font-size="8.6" font-weight="bold" fill="#071a07" textLength="13.5" lengthAdjust="spacingAndGlyphs">S12</text>
<circle cx="772" cy="239" r="11.0" fill="#3cc43c" opacity="0.85"/>
<circle cx="772" cy="239" r="9.4" fill="#0ea30e" stroke="#0a300a" stroke-width="1.7"/>
<text x="765.2" y="242.1" font-size="8.6" font-weight="bold" fill="#071a07" textLength="13.5" lengthAdjust="spacingAndGlyphs">S12</text>
<circle cx="804" cy="244" r="11.5" fill="#3cc43c" opacity="0.85"/>
<circle cx="804" cy="244" r="9.9" fill="#0ea30e" stroke="#0a300a" stroke-width="1.7"/>
<text x="797.2" y="247.1" font-size="8.6" font-weight="bold" fill="#071a07" textLength="13.5" lengthAdjust="spacingAndGlyphs">IC1</text>
<circle cx="874" cy="296" r="11.5" fill="#3cc43c" opacity="0.85"/>
<circle cx="874" cy="296" r="9.9" fill="#0ea30e" stroke="#0a300a" stroke-width="1.7"/>
<text x="868.5" y="299.3" font-size="9.2" font-weight="bold" fill="#071a07" textLength="11.0" lengthAdjust="spacingAndGlyphs">S3</text>
<circle cx="877.5" cy="298" r="11.5" fill="#3cc43c" opacity="0.85"/>
<circle cx="877.5" cy="298" r="9.9" fill="#0ea30e" stroke="#0a300a" stroke-width="1.7"/>
<text x="872.0" y="301.3" font-size="9.2" font-weight="bold" fill="#071a07" textLength="11.0" lengthAdjust="spacingAndGlyphs">S3</text>
<circle cx="482" cy="270.5" r="11.5" fill="#3cc43c" opacity="0.85"/>
<circle cx="482" cy="270.5" r="9.9" fill="#0ea30e" stroke="#0a300a" stroke-width="1.7"/>
<text x="475.2" y="273.6" font-size="8.6" font-weight="bold" fill="#071a07" textLength="13.5" lengthAdjust="spacingAndGlyphs">S12</text>
<circle cx="515.5" cy="295.5" r="11.5" fill="#3cc43c" opacity="0.85"/>
<circle cx="515.5" cy="295.5" r="9.9" fill="#0ea30e" stroke="#0a300a" stroke-width="1.7"/>
<text x="508.8" y="298.6" font-size="8.6" font-weight="bold" fill="#071a07" textLength="13.5" lengthAdjust="spacingAndGlyphs">S14</text>
<circle cx="557.5" cy="286" r="11.0" fill="#3cc43c" opacity="0.85"/>
<circle cx="557.5" cy="286" r="9.4" fill="#0ea30e" stroke="#0a300a" stroke-width="1.7"/>
<text x="550.5" y="288.6" font-size="7.2" font-weight="bold" fill="#071a07" textLength="14.0" lengthAdjust="spacingAndGlyphs">IR35</text>
<circle cx="552" cy="283" r="11.0" fill="#3cc43c" opacity="0.85"/>
<circle cx="552" cy="283" r="9.4" fill="#0ea30e" stroke="#0a300a" stroke-width="1.7"/>
<text x="545.0" y="285.6" font-size="7.2" font-weight="bold" fill="#071a07" textLength="14.0" lengthAdjust="spacingAndGlyphs">IR35</text>
<circle cx="611" cy="305.8" r="12.0" fill="#3cc43c" opacity="0.85"/>
<circle cx="611" cy="305.8" r="10.4" fill="#0ea30e" stroke="#0a300a" stroke-width="1.7"/>
<text x="604.2" y="308.9" font-size="8.6" font-weight="bold" fill="#071a07" textLength="13.5" lengthAdjust="spacingAndGlyphs">ICE</text>
<circle cx="616" cy="308.6" r="12.0" fill="#3cc43c" opacity="0.85"/>
<circle cx="616" cy="308.6" r="10.4" fill="#0ea30e" stroke="#0a300a" stroke-width="1.7"/>
<text x="609.2" y="311.7" font-size="8.6" font-weight="bold" fill="#071a07" textLength="13.5" lengthAdjust="spacingAndGlyphs">ICE</text>
<circle cx="699.7" cy="299.8" r="11.5" fill="#3cc43c" opacity="0.85"/>
<circle cx="699.7" cy="299.8" r="9.9" fill="#0ea30e" stroke="#0a300a" stroke-width="1.7"/>
<text x="694.2" y="303.1" font-size="9.2" font-weight="bold" fill="#071a07" textLength="11.0" lengthAdjust="spacingAndGlyphs">S5</text>
<circle cx="691.2" cy="308.6" r="11.5" fill="#3cc43c" opacity="0.85"/>
<circle cx="691.2" cy="308.6" r="9.9" fill="#0ea30e" stroke="#0a300a" stroke-width="1.7"/>
<text x="685.7" y="311.9" font-size="9.2" font-weight="bold" fill="#071a07" textLength="11.0" lengthAdjust="spacingAndGlyphs">S5</text>
<circle cx="795" cy="319.5" r="11.5" fill="#3cc43c" opacity="0.85"/>
<circle cx="795" cy="319.5" r="9.9" fill="#0ea30e" stroke="#0a300a" stroke-width="1.7"/>
<text x="788.2" y="322.6" font-size="8.6" font-weight="bold" fill="#071a07" textLength="13.5" lengthAdjust="spacingAndGlyphs">S14</text>
<circle cx="648" cy="329.3" r="11.5" fill="#3cc43c" opacity="0.85"/>
<circle cx="648" cy="329.3" r="9.9" fill="#0ea30e" stroke="#0a300a" stroke-width="1.7"/>
<text x="642.5" y="332.6" font-size="9.2" font-weight="bold" fill="#071a07" textLength="11.0" lengthAdjust="spacingAndGlyphs">S9</text>
<circle cx="639.5" cy="318" r="12.0" fill="#3cc43c" opacity="0.85"/>
<circle cx="639.5" cy="318" r="10.4" fill="#0ea30e" stroke="#0a300a" stroke-width="1.7"/>
<text x="632.8" y="321.1" font-size="8.6" font-weight="bold" fill="#071a07" textLength="13.5" lengthAdjust="spacingAndGlyphs">S11</text>
<circle cx="626.4" cy="336.8" r="11.5" fill="#3cc43c" opacity="0.85"/>
<circle cx="626.4" cy="336.8" r="9.9" fill="#0ea30e" stroke="#0a300a" stroke-width="1.7"/>
<text x="620.9" y="340.1" font-size="9.2" font-weight="bold" fill="#071a07" textLength="11.0" lengthAdjust="spacingAndGlyphs">S4</text>
<circle cx="610.4" cy="343.4" r="14.0" fill="#3cc43c" opacity="0.85"/>
<circle cx="610.4" cy="343.4" r="12.4" fill="#0ea30e" stroke="#0a300a" stroke-width="1.7"/>
<text x="600.6" y="347.9" font-size="12.5" font-weight="bold" fill="#071a07" textLength="19.5" lengthAdjust="spacingAndGlyphs">S10</text>
<circle cx="676.2" cy="351.8" r="11.5" fill="#3cc43c" opacity="0.85"/>
<circle cx="676.2" cy="351.8" r="9.9" fill="#0ea30e" stroke="#0a300a" stroke-width="1.7"/>
<text x="669.5" y="354.9" font-size="8.6" font-weight="bold" fill="#071a07" textLength="13.5" lengthAdjust="spacingAndGlyphs">S18</text>
<circle cx="706" cy="371" r="11.5" fill="#3cc43c" opacity="0.85"/>
<circle cx="706" cy="371" r="9.9" fill="#0ea30e" stroke="#0a300a" stroke-width="1.7"/>
<text x="699.2" y="374.1" font-size="8.6" font-weight="bold" fill="#071a07" textLength="13.5" lengthAdjust="spacingAndGlyphs">S18</text>
<circle cx="765" cy="409.5" r="11.5" fill="#3cc43c" opacity="0.85"/>
<circle cx="765" cy="409.5" r="9.9" fill="#0ea30e" stroke="#0a300a" stroke-width="1.7"/>
<text x="758.2" y="412.6" font-size="8.6" font-weight="bold" fill="#071a07" textLength="13.5" lengthAdjust="spacingAndGlyphs">S18</text>
<circle cx="631" cy="372" r="11.5" fill="#3cc43c" opacity="0.85"/>
<circle cx="631" cy="372" r="9.9" fill="#0ea30e" stroke="#0a300a" stroke-width="1.7"/>
<text x="624.2" y="375.1" font-size="8.6" font-weight="bold" fill="#071a07" textLength="13.5" lengthAdjust="spacingAndGlyphs">S24</text>
<circle cx="614" cy="396" r="11.5" fill="#3cc43c" opacity="0.85"/>
<circle cx="614" cy="396" r="9.9" fill="#0ea30e" stroke="#0a300a" stroke-width="1.7"/>
<text x="608.5" y="399.3" font-size="9.2" font-weight="bold" fill="#071a07" textLength="11.0" lengthAdjust="spacingAndGlyphs">S4</text>
<circle cx="553" cy="392" r="11.5" fill="#3cc43c" opacity="0.85"/>
<circle cx="553" cy="392" r="9.9" fill="#0ea30e" stroke="#0a300a" stroke-width="1.7"/>
<text x="547.5" y="395.3" font-size="9.2" font-weight="bold" fill="#071a07" textLength="11.0" lengthAdjust="spacingAndGlyphs">S5</text>
<circle cx="554" cy="407.5" r="11.5" fill="#3cc43c" opacity="0.85"/>
<circle cx="554" cy="407.5" r="9.9" fill="#0ea30e" stroke="#0a300a" stroke-width="1.7"/>
<text x="548.5" y="410.8" font-size="9.2" font-weight="bold" fill="#071a07" textLength="11.0" lengthAdjust="spacingAndGlyphs">S5</text>
<circle cx="657" cy="441" r="11.5" fill="#3cc43c" opacity="0.85"/>
<circle cx="657" cy="441" r="9.9" fill="#0ea30e" stroke="#0a300a" stroke-width="1.7"/>
<text x="651.5" y="444.3" font-size="9.2" font-weight="bold" fill="#071a07" textLength="11.0" lengthAdjust="spacingAndGlyphs">S2</text>
<circle cx="667" cy="460" r="11.5" fill="#3cc43c" opacity="0.85"/>
<circle cx="667" cy="460" r="9.9" fill="#0ea30e" stroke="#0a300a" stroke-width="1.7"/>
<text x="661.5" y="463.3" font-size="9.2" font-weight="bold" fill="#071a07" textLength="11.0" lengthAdjust="spacingAndGlyphs">S2</text>
<circle cx="643" cy="469" r="11.5" fill="#3cc43c" opacity="0.85"/>
<circle cx="643" cy="469" r="9.9" fill="#0ea30e" stroke="#0a300a" stroke-width="1.7"/>
<text x="637.5" y="472.3" font-size="9.2" font-weight="bold" fill="#071a07" textLength="11.0" lengthAdjust="spacingAndGlyphs">S4</text>
<circle cx="691" cy="431" r="11.5" fill="#3cc43c" opacity="0.85"/>
<circle cx="691" cy="431" r="9.9" fill="#0ea30e" stroke="#0a300a" stroke-width="1.7"/>
<text x="684.2" y="434.1" font-size="8.6" font-weight="bold" fill="#071a07" textLength="13.5" lengthAdjust="spacingAndGlyphs">S16</text>
<circle cx="695" cy="436" r="11.5" fill="#3cc43c" opacity="0.85"/>
<circle cx="695" cy="436" r="9.9" fill="#0ea30e" stroke="#0a300a" stroke-width="1.7"/>
<text x="688.2" y="439.1" font-size="8.6" font-weight="bold" fill="#071a07" textLength="13.5" lengthAdjust="spacingAndGlyphs">S16</text>
<circle cx="924.5" cy="409" r="11.5" fill="#3cc43c" opacity="0.85"/>
<circle cx="924.5" cy="409" r="9.9" fill="#0ea30e" stroke="#0a300a" stroke-width="1.7"/>
<text x="917.8" y="412.1" font-size="8.6" font-weight="bold" fill="#071a07" textLength="13.5" lengthAdjust="spacingAndGlyphs">S15</text>
<circle cx="934.5" cy="421" r="11.5" fill="#3cc43c" opacity="0.85"/>
<circle cx="934.5" cy="421" r="9.9" fill="#0ea30e" stroke="#0a300a" stroke-width="1.7"/>
<text x="927.8" y="424.1" font-size="8.6" font-weight="bold" fill="#071a07" textLength="13.5" lengthAdjust="spacingAndGlyphs">S15</text>
<circle cx="706" cy="520" r="11.5" fill="#3cc43c" opacity="0.85"/>
<circle cx="706" cy="520" r="9.9" fill="#0ea30e" stroke="#0a300a" stroke-width="1.7"/>
<text x="700.5" y="523.3" font-size="9.2" font-weight="bold" fill="#071a07" textLength="11.0" lengthAdjust="spacingAndGlyphs">S8</text>
<circle cx="789" cy="517.5" r="11.5" fill="#3cc43c" opacity="0.85"/>
<circle cx="789" cy="517.5" r="9.9" fill="#0ea30e" stroke="#0a300a" stroke-width="1.7"/>
<text x="783.5" y="520.8" font-size="9.2" font-weight="bold" fill="#071a07" textLength="11.0" lengthAdjust="spacingAndGlyphs">S7</text>
<circle cx="446.2" cy="350.2" r="11.0" fill="#3cc43c" opacity="0.85"/>
<circle cx="446.2" cy="350.2" r="9.4" fill="#0ea30e" stroke="#0a300a" stroke-width="1.7"/>
<text x="439.4" y="353.3" font-size="8.6" font-weight="bold" fill="#071a07" textLength="13.5" lengthAdjust="spacingAndGlyphs">S17</text>
<circle cx="434.9" cy="347.4" r="11.0" fill="#3cc43c" opacity="0.85"/>
<circle cx="434.9" cy="347.4" r="9.4" fill="#0ea30e" stroke="#0a300a" stroke-width="1.7"/>
<text x="428.1" y="350.5" font-size="8.6" font-weight="bold" fill="#071a07" textLength="13.5" lengthAdjust="spacingAndGlyphs">S17</text>
<circle cx="400.3" cy="374.2" r="11.5" fill="#3cc43c" opacity="0.85"/>
<circle cx="400.3" cy="374.2" r="9.9" fill="#0ea30e" stroke="#0a300a" stroke-width="1.7"/>
<text x="393.6" y="377.3" font-size="8.6" font-weight="bold" fill="#071a07" textLength="13.5" lengthAdjust="spacingAndGlyphs">S17</text>
<circle cx="61" cy="321" r="11.0" fill="#ffd21a" opacity="0.85"/>
<circle cx="61" cy="321" r="9.4" fill="#f6c400" stroke="#4a3a00" stroke-width="1.7"/>
<text x="54.2" y="324.1" font-size="8.6" font-weight="bold" fill="#1a1400" textLength="13.5" lengthAdjust="spacingAndGlyphs">S14</text>
<circle cx="52" cy="341" r="11.0" fill="#ffd21a" opacity="0.85"/>
<circle cx="52" cy="341" r="9.4" fill="#f6c400" stroke="#4a3a00" stroke-width="1.7"/>
<text x="45.2" y="344.1" font-size="8.6" font-weight="bold" fill="#1a1400" textLength="13.5" lengthAdjust="spacingAndGlyphs">S14</text>
<circle cx="69" cy="397.5" r="11.0" fill="#ffd21a" opacity="0.85"/>
<circle cx="69" cy="397.5" r="9.4" fill="#f6c400" stroke="#4a3a00" stroke-width="1.7"/>
<text x="62.2" y="400.6" font-size="8.6" font-weight="bold" fill="#1a1400" textLength="13.5" lengthAdjust="spacingAndGlyphs">S14</text>
<circle cx="65" cy="417.5" r="11.5" fill="#3cc43c" opacity="0.85"/>
<circle cx="65" cy="417.5" r="9.9" fill="#0ea30e" stroke="#0a300a" stroke-width="1.7"/>
<text x="58.2" y="420.6" font-size="8.6" font-weight="bold" fill="#071a07" textLength="13.5" lengthAdjust="spacingAndGlyphs">S14</text>
<circle cx="17.5" cy="412.5" r="11.0" fill="#3cc43c" opacity="0.85"/>
<circle cx="17.5" cy="412.5" r="9.4" fill="#0ea30e" stroke="#0a300a" stroke-width="1.7"/>
<text x="12.0" y="415.8" font-size="9.2" font-weight="bold" fill="#071a07" textLength="11.0" lengthAdjust="spacingAndGlyphs">S8</text>
<circle cx="12" cy="432" r="11.0" fill="#3cc43c" opacity="0.85"/>
<circle cx="12" cy="432" r="9.4" fill="#0ea30e" stroke="#0a300a" stroke-width="1.7"/>
<text x="6.5" y="435.3" font-size="9.2" font-weight="bold" fill="#071a07" textLength="11.0" lengthAdjust="spacingAndGlyphs">S9</text>
<circle cx="136" cy="427.5" r="11.5" fill="#3cc43c" opacity="0.85"/>
<circle cx="136" cy="427.5" r="9.9" fill="#0ea30e" stroke="#0a300a" stroke-width="1.7"/>
<text x="129.2" y="430.6" font-size="8.6" font-weight="bold" fill="#071a07" textLength="13.5" lengthAdjust="spacingAndGlyphs">S14</text>
<circle cx="144" cy="445.5" r="11.5" fill="#3cc43c" opacity="0.85"/>
<circle cx="144" cy="445.5" r="9.9" fill="#0ea30e" stroke="#0a300a" stroke-width="1.7"/>
<text x="137.2" y="448.6" font-size="8.6" font-weight="bold" fill="#071a07" textLength="13.5" lengthAdjust="spacingAndGlyphs">S14</text>
<circle cx="235" cy="452.5" r="11.5" fill="#3cc43c" opacity="0.85"/>
<circle cx="235" cy="452.5" r="9.9" fill="#0ea30e" stroke="#0a300a" stroke-width="1.7"/>
<text x="229.5" y="455.8" font-size="9.2" font-weight="bold" fill="#071a07" textLength="11.0" lengthAdjust="spacingAndGlyphs">S9</text>
<circle cx="241" cy="497.5" r="11.5" fill="#3cc43c" opacity="0.85"/>
<circle cx="241" cy="497.5" r="9.9" fill="#0ea30e" stroke="#0a300a" stroke-width="1.7"/>
<text x="235.5" y="500.8" font-size="9.2" font-weight="bold" fill="#071a07" textLength="11.0" lengthAdjust="spacingAndGlyphs">S9</text>
<circle cx="213" cy="511.75" r="11.5" fill="#3cc43c" opacity="0.85"/>
<circle cx="213" cy="511.75" r="9.9" fill="#0ea30e" stroke="#0a300a" stroke-width="1.7"/>
<text x="206.2" y="514.8" font-size="8.6" font-weight="bold" fill="#071a07" textLength="13.5" lengthAdjust="spacingAndGlyphs">S14</text>
<circle cx="221" cy="531" r="11.5" fill="#3cc43c" opacity="0.85"/>
<circle cx="221" cy="531" r="9.9" fill="#0ea30e" stroke="#0a300a" stroke-width="1.7"/>
<text x="214.2" y="534.1" font-size="8.6" font-weight="bold" fill="#071a07" textLength="13.5" lengthAdjust="spacingAndGlyphs">S14</text>
</g>
</g>
</svg>
<div id="header">
<div class="abs" style="left:5.5px;top:7px;width:199px;height:39px;border:1px solid #555;background:#fff"></div>
<div class="abs t" style="left:14px;top:16.5px;font-size:7.6px;color:#222;letter-spacing:-0.15px">Netzkarte Personenverkehr</div>
<div class="abs t" style="left:14px;top:28px;font-size:7.6px;color:#8c8c8c;letter-spacing:-0.15px">Pünktlichkeit</div>
<svg class="abs" style="left:190px;top:24.5px" width="8" height="6" viewBox="0 0 8 6"><path d="M1.5 1.5 L4 4 L6.5 1.5" fill="none" stroke="#111" stroke-width="1.5"/></svg>
<div class="abs" style="left:338.5px;top:15.5px;width:214px;height:23.5px;border:1px solid #b9b9b9;background:#fff"></div>
<div class="abs" style="left:527px;top:15.5px;width:25.5px;height:23.5px;background:#eb0000"></div>
<svg class="abs" style="left:533px;top:21px" width="13" height="13" viewBox="0 0 13 13"><circle cx="5.6" cy="5.6" r="3" fill="none" stroke="#fff" stroke-width="1.7"/><path d="M7.8 7.8 L10.3 10.3" stroke="#fff" stroke-width="2" stroke-linecap="round"/></svg>
<div class="abs t" style="left:347px;top:23.5px;font-size:7.8px;color:#7a7a7a;letter-spacing:-0.05px">Stationen, Orte, Linien ...</div>
<svg class="abs" style="left:681px;top:21.5px" width="11" height="12" viewBox="0 0 11 12"><circle cx="5.5" cy="3.6" r="2.7" fill="none" stroke="#666" stroke-width="0.9"/><path d="M1 11.2 C1 8 3 6.9 5.5 6.9 C8 6.9 10 8 10 11.2 Z" fill="none" stroke="#666" stroke-width="0.9"/></svg>
<div class="abs t" style="left:693px;top:24.5px;font-size:8px;color:#666;letter-spacing:-0.3px">Anmelden</div>
<svg class="abs" style="left:735.5px;top:21.5px" width="12" height="12" viewBox="0 0 12 12"><g fill="none" stroke="#666" stroke-width="0.9"><circle cx="6" cy="6" r="5.2"/><ellipse cx="6" cy="6" rx="2.3" ry="5.2"/><path d="M6 0.8V11.2M0.8 6H11.2M1.6 3.4H10.4M1.6 8.6H10.4"/></g></svg>
<div class="abs t" style="left:750px;top:24.5px;font-size:8px;color:#666;letter-spacing:-0.3px">Deutsch</div>
<svg class="abs" style="left:782px;top:25px" width="8" height="6" viewBox="0 0 8 6"><path d="M1.2 1.5 L4 4.2 L6.8 1.5" fill="none" stroke="#777" stroke-width="1"/></svg>
<div class="abs" style="left:825px;top:21px;width:33.5px;height:11.7px;background:#eb0000"></div>
<svg class="abs" style="left:841px;top:21px" width="15" height="12" viewBox="0 0 15 12"><g fill="#fff"><path d="M3.6 1.2H5.9L3.4 3.9H6.3V1.2H8.1V3.9H11L8.5 1.2H10.8L14 5.85L10.8 10.5H8.5L11 7.8H8.1V10.5H6.3V7.8H3.4L5.9 10.5H3.6L0.4 5.85Z"/></g></svg>
<div class="abs t" style="left:861px;top:22px;font-size:12px;font-weight:bold;color:#111;letter-spacing:-0.65px;white-space:nowrap">SBB CFF FFS</div>
</div>
<div id="panel" class="abs" style="left:5.5px;top:49px;width:199px;height:256px;background:#fff;border:1px solid #5a5a5a;border-bottom-color:#6a6a6a">
<svg class="abs" style="left:8px;top:8.5px" width="9" height="7" viewBox="0 0 9 7"><path d="M0.5 1H6L8.5 3.5L6 6H0.5Z" fill="#111"/></svg>
<div class="abs t" style="left:21px;top:8.5px;font-size:7.6px;color:#444;letter-spacing:-0.15px">Pünktlichkeit</div>
<svg class="abs" style="left:183px;top:8px" width="8" height="6" viewBox="0 0 8 6"><path d="M1.5 4 L4 1.5 L6.5 4" fill="none" stroke="#111" stroke-width="1.5"/></svg>
<div class="abs" style="left:2px;top:23.5px;width:193px;height:1px;background:#eeeeee"></div>
<div class="abs" style="left:13px;top:37.4px;width:21px;height:18.5px;border-radius:50%;background:#f7e200;border:1.3px solid #222"></div>
<div class="abs t" style="left:13px;top:43px;width:21px;text-align:center;font-size:8px;font-weight:bold;color:#222;letter-spacing:-0.6px">S10</div>
<div class="abs t" style="left:42px;top:38.3px;font-size:8px;font-weight:bold;color:#111;letter-spacing:-0.5px">Zürich Triemli</div>
<div class="abs t" style="left:42px;top:51.4px;font-size:7.5px;color:#444;letter-spacing:-0.1px">S 10 (12853)</div>
<div class="abs" style="left:63.60px;top:77.50px;width:2.2px;height:40.10px;background:#3b6aa6"></div>
<div class="abs" style="left:63.45px;top:117.60px;width:2.5px;height:93.70px;background:#0d2b6b"></div>
<div class="abs t" style="left:20px;width:35.6px;text-align:right;top:73.90px;font-size:7.4px;color:#333;letter-spacing:-0.1px">13:55</div>
<div class="abs" style="left:61.70px;top:74.50px;width:6px;height:6px;border-radius:50%;background:#fff;border:1.4px solid #3b6aa6"></div>
<div class="abs t" style="left:70.5px;top:73.80px;font-size:7.6px;color:#333;letter-spacing:-0.15px">Zürich HB SZU</div>
<div class="abs t" style="left:20px;width:35.6px;text-align:right;top:96.40px;font-size:7.4px;color:#8a8a8a;letter-spacing:-0.1px">13:56</div>
<div class="abs t" style="left:20px;width:35.6px;text-align:right;top:104.80px;font-size:7.4px;color:#8a8a8a;letter-spacing:-0.1px">13:56</div>
<div class="abs" style="left:61.70px;top:101.20px;width:6px;height:6px;border-radius:50%;background:#fff;border:1.4px solid #3b6aa6"></div>
<div class="abs t" style="left:70.5px;top:100.50px;font-size:7.6px;color:#9a9a9a;letter-spacing:-0.15px">Zürich Selnau</div>
<div class="abs t" style="left:20px;width:35.6px;text-align:right;top:123.20px;font-size:7.4px;color:#333;letter-spacing:-0.1px">13:59</div>
<div class="abs t" style="left:20px;width:35.6px;text-align:right;top:131.60px;font-size:7.4px;color:#333;letter-spacing:-0.1px">13:59</div>
<div class="abs t" style="left:12.5px;top:123.20px;font-size:7.4px;color:#2e9e2e;font-weight:bold;">+1m</div>
<div class="abs t" style="left:12.5px;top:131.60px;font-size:7.4px;color:#2e9e2e;font-weight:bold;">+1m</div>
<div class="abs" style="left:61.70px;top:128.00px;width:6px;height:6px;border-radius:50%;background:#fff;border:1.4px solid #0d2b6b"></div>
<div class="abs t" style="left:70.5px;top:127.30px;font-size:7.6px;color:#333;letter-spacing:-0.15px">Zürich Binz</div>
<div class="abs t" style="left:20px;width:35.6px;text-align:right;top:150.00px;font-size:7.4px;color:#333;letter-spacing:-0.1px">14:01</div>
<div class="abs t" style="left:20px;width:35.6px;text-align:right;top:158.40px;font-size:7.4px;color:#333;letter-spacing:-0.1px">14:01</div>
<div class="abs t" style="left:12.5px;top:150.00px;font-size:7.4px;color:#2e9e2e;font-weight:bold;">+1m</div>
<div class="abs t" style="left:12.5px;top:158.40px;font-size:7.4px;color:#2e9e2e;font-weight:bold;">+1m</div>
<div class="abs" style="left:61.70px;top:154.80px;width:6px;height:6px;border-radius:50%;background:#fff;border:1.4px solid #0d2b6b"></div>
<div class="abs t" style="left:70.5px;top:154.10px;font-size:7.6px;color:#444;letter-spacing:-0.15px">Zürich Friesenberg</div>
<div class="abs t" style="left:20px;width:35.6px;text-align:right;top:176.80px;font-size:7.4px;color:#333;letter-spacing:-0.1px">14:02</div>
<div class="abs t" style="left:20px;width:35.6px;text-align:right;top:185.20px;font-size:7.4px;color:#333;letter-spacing:-0.1px">14:02</div>
<div class="abs t" style="left:12.5px;top:176.80px;font-size:7.4px;color:#2e9e2e;font-weight:bold;">+1m</div>
<div class="abs t" style="left:12.5px;top:185.20px;font-size:7.4px;color:#2e9e2e;font-weight:bold;">+1m</div>
<div class="abs" style="left:61.70px;top:181.60px;width:6px;height:6px;border-radius:50%;background:#fff;border:1.4px solid #0d2b6b"></div>
<div class="abs t" style="left:70.5px;top:180.90px;font-size:7.6px;color:#444;letter-spacing:-0.15px">Zürich Schweighof</div>
<div class="abs t" style="left:20px;width:35.6px;text-align:right;top:207.70px;font-size:7.4px;color:#111;font-weight:bold;letter-spacing:-0.1px">14:04</div>
<div class="abs t" style="left:12.5px;top:207.70px;font-size:7.4px;color:#2e9e2e;font-weight:bold;">+1m</div>
<div class="abs" style="left:61.70px;top:208.30px;width:6px;height:6px;border-radius:50%;background:#fff;border:1.4px solid #0d2b6b"></div>
<div class="abs t" style="left:70.5px;top:207.60px;font-size:7.6px;color:#111;font-weight:bold;letter-spacing:-0.15px">Zürich Triemli</div>
<div class="abs t" style="left:10.5px;top:236px;font-size:6.7px;color:#555;text-decoration:underline;letter-spacing:-0.12px">SZU (Sihltal-Zürich-Uetliberg-Bahn)</div>
<div class="abs t" style="left:114px;top:236px;font-size:6.7px;color:#555;letter-spacing:-0.1px">-</div>
<div class="abs t" style="left:118.5px;top:236px;font-size:6.7px;color:#555;text-decoration:underline;letter-spacing:-0.1px">SBB</div>
</div>
</div>
<div id="stand">
<div class="abs" style="left:0;top:1px;width:240px;height:74px;background:linear-gradient(#b8b9bb 0%,#b9babc 60%,#b0b1b2 81%,#8e8e8f 89%,#707071 96%,#7a7a7a 100%)"></div>
<div class="abs" style="left:-0.5px;top:1px;width:2px;height:74px;background:linear-gradient(#dedede,#d5d5d5 80%,#9a9a9a)"></div>
<div class="abs" style="left:0;top:75px;width:239px;height:11px;background:linear-gradient(90deg,#a9a9a9 0%,#d9d9d9 4%,#f4f4f4 7%,#e6e6e6 9%,#c9c9c9 14%,#c6c6c6 50%,#c0c0c0 85%,#9a9a9a 93%,#3e3e3e 97%,#5a5a5a 100%);border-radius:0 0 3px 3px"></div>
<div class="abs" style="left:5px;top:86px;width:37px;height:2px;background:#444"></div>
<div class="abs" style="left:198px;top:86px;width:36px;height:2px;background:#444"></div>
</div>
</body></html>
